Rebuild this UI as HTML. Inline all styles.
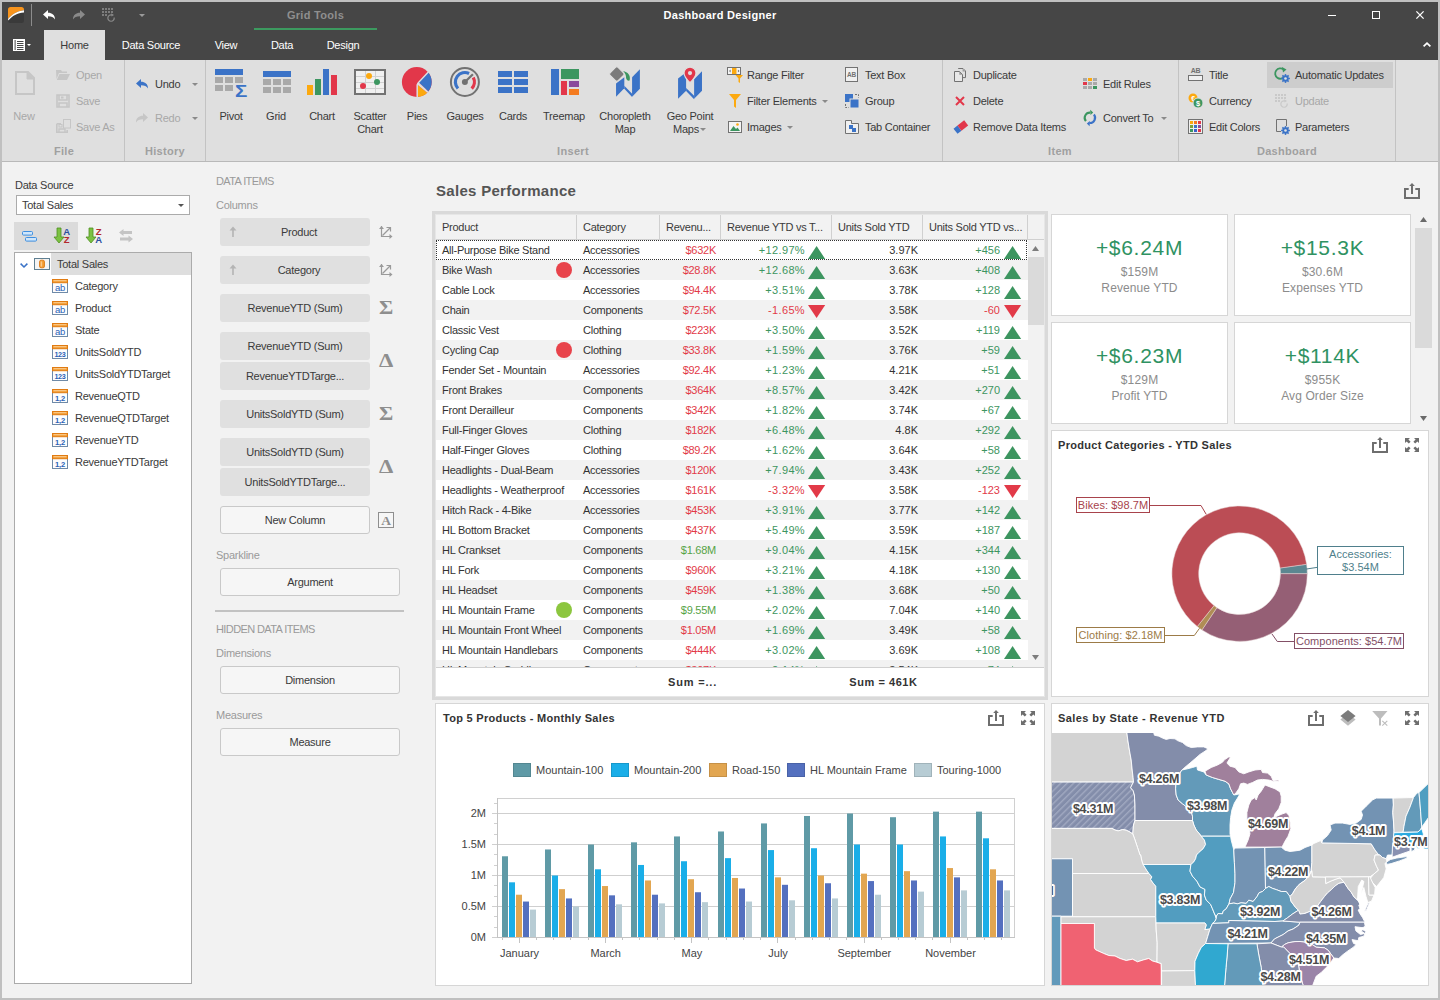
<!DOCTYPE html>
<html lang="en">
<head>
<meta charset="utf-8">
<title>Dashboard Designer</title>
<style>
*{box-sizing:border-box;margin:0;padding:0}
html,body{width:1440px;height:1000px;overflow:hidden}
body{position:relative;background:#f2f2f2;font-family:"Liberation Sans",sans-serif;font-size:11px;color:#3a3a3a;letter-spacing:-0.25px}
.b,.t,.i{position:absolute}
.t{white-space:nowrap;line-height:14px;height:14px}
.i{overflow:visible}
.w{color:#fff}
.g{color:#a8a8a8}
.h{color:#a0a0a0;font-weight:bold;letter-spacing:0.3px}
.ls0{letter-spacing:0}
.lb{color:#9a9a9a}
.bd{font-weight:bold;letter-spacing:0.3px}
.c{text-align:center}
.r{text-align:right}
</style>
</head>
<body>
<div class="b" style="left:0px;top:0px;width:1440px;height:1000px;background:#c0c0c0">
</div>
<div class="b" style="left:2px;top:2px;width:1436px;height:996px;background:#f2f2f2">
</div>
<div class="b" style="left:2px;top:2px;width:1436px;height:58px;background:#464646">
</div>
<div class="b" style="left:2px;top:60px;width:1436px;height:101px;background:#dfdfdf">
</div>
<div class="b" style="left:2px;top:161px;width:1436px;height:1px;background:#b9b9b9">
</div>
<div class="b" style="left:44px;top:30px;width:61px;height:31px;background:#dfdfdf">
</div>
<svg class="i" style="left:8px;top:7px" width="16" height="16" viewBox="0 0 16 16" >
<rect x="0" y="0" width="16" height="16" rx="2.5" fill="#3a3a3a"/>
<path d="M0 2.5A2.5 2.5 0 0 1 2.5 0H13.5A2.5 2.5 0 0 1 16 2.5V3.2C9 4 3.5 7.5 0 12Z" fill="#f7941d"/>
<path d="M0 12C3.5 7.5 9 4 16 3.2V5.5C9.5 6 4 9 0.3 13.5Z" fill="#fff"/>
</svg>
<div class="b" style="left:31px;top:4px;width:1px;height:22px;background:#8c8c8c">
</div>
<svg class="i" style="left:43px;top:10px" width="12" height="10" viewBox="0 0 12 10" >
<path d="M0 4.5L5 0V2.8C9 2.8 12 5 12 9.5C10.6 7 8.6 6.2 5 6.2V9Z" fill="#fff"/>
</svg>
<svg class="i" style="left:73px;top:10px" width="12" height="10" viewBox="0 0 12 10" >
<path d="M0 4.5L5 0V2.8C9 2.8 12 5 12 9.5C10.6 7 8.6 6.2 5 6.2V9Z" fill="#8a8a8a" transform="translate(12,0) scale(-1,1)"/>
</svg>
<svg class="i" style="left:102px;top:8px" width="14" height="14" viewBox="0 0 14 14" >
<rect x="0" y="0" width="2" height="2" fill="#7d7d7d"/>
<rect x="3" y="0" width="2" height="2" fill="#7d7d7d"/>
<rect x="6" y="0" width="2" height="2" fill="#7d7d7d"/>
<rect x="9" y="0" width="2" height="2" fill="#7d7d7d"/>
<rect x="0" y="3" width="2" height="2" fill="#7d7d7d"/>
<rect x="3" y="3" width="2" height="2" fill="#7d7d7d"/>
<rect x="6" y="3" width="2" height="2" fill="#7d7d7d"/>
<rect x="9" y="3" width="2" height="2" fill="#7d7d7d"/>
<rect x="0" y="6" width="2" height="2" fill="#7d7d7d"/>
<rect x="3" y="6" width="2" height="2" fill="#7d7d7d"/>
<path d="M12.2 9.5A3.2 3.2 0 1 1 10 7" fill="none" stroke="#8a8a8a" stroke-width="1.2"/>
<path d="M9.2 5.2L12 7L9.5 8.6Z" fill="#8a8a8a"/>
</svg>
<svg class="i" style="left:139px;top:14px" width="6" height="3" viewBox="0 0 6 3" >
<path d="M0 0H6L3 3Z" fill="#9a9a9a"/>
</svg>
<div class="t bd c" style="left:254px;top:8px;width:123px;color:#8f8f8f">Grid Tools</div>
<div class="b" style="left:254px;top:28px;width:123px;height:2px;background:#3c9a5f">
</div>
<div class="t bd c w" style="left:620px;top:8px;width:200px;">Dashboard Designer</div>
<div class="b" style="left:1328px;top:15px;width:8px;height:1px;background:#fff">
</div>
<div class="b" style="left:1372px;top:11px;width:8px;height:8px;border:1px solid #fff">
</div>
<svg class="i" style="left:1416px;top:11px" width="8" height="8" viewBox="0 0 8 8" >
<path d="M0.4 0.4L7.6 7.6M7.6 0.4L0.4 7.6" stroke="#fff" stroke-width="1.3"/>
</svg>
<svg class="i" style="left:1423px;top:42px" width="8" height="5" viewBox="0 0 8 5" >
<path d="M0.6 4.4L4 1.1L7.4 4.4" stroke="#fff" stroke-width="1.7" fill="none"/>
</svg>
<svg class="i" style="left:13px;top:39px" width="12" height="12" viewBox="0 0 12 12" >
<rect x="0" y="0" width="12" height="12" fill="#fff"/>
<rect x="1.6" y="1" width="1" height="10" fill="#464646"/>
<rect x="4" y="2" width="6.5" height="1" fill="#464646"/>
<rect x="4" y="4" width="6.5" height="1" fill="#464646"/>
<rect x="4" y="6" width="6.5" height="1" fill="#464646"/>
<rect x="4" y="8" width="6.5" height="1" fill="#464646"/>
<rect x="4" y="10" width="6.5" height="1" fill="#464646"/>
</svg>
<svg class="i" style="left:27px;top:44px" width="4" height="2" viewBox="0 0 4 2" >
<path d="M0 0H4L2 2Z" fill="#fff"/>
</svg>
<div class="t c" style="left:44px;top:38px;width:61px;">Home</div>
<div class="t c w" style="left:105px;top:38px;width:92px;">Data Source</div>
<div class="t c w" style="left:197px;top:38px;width:58px;">View</div>
<div class="t c w" style="left:255px;top:38px;width:54px;">Data</div>
<div class="t c w" style="left:309px;top:38px;width:68px;">Design</div>
<div class="b" style="left:124px;top:60px;width:1px;height:101px;background:#c3c3c3">
</div>
<div class="b" style="left:205px;top:60px;width:1px;height:101px;background:#c3c3c3">
</div>
<div class="b" style="left:942px;top:60px;width:1px;height:101px;background:#c3c3c3">
</div>
<div class="b" style="left:1178px;top:60px;width:1px;height:101px;background:#c3c3c3">
</div>
<div class="b" style="left:1395px;top:60px;width:1px;height:101px;background:#c3c3c3">
</div>
<svg class="i" style="left:15px;top:71px" width="20" height="24" viewBox="0 0 20 24" >
<path d="M1 1H13L19 7V23H1Z" fill="none" stroke="#c6c6c6" stroke-width="2"/>
<path d="M12 1V8H19" fill="#c6c6c6" stroke="#c6c6c6" stroke-width="1"/>
</svg>
<div class="t g c" style="left:4px;top:109px;width:40px;">New</div>
<svg class="i" style="left:56px;top:70px" width="14" height="10" viewBox="0 0 14 10" >
<path d="M0 0H5L6 1.5H11V3H3L0.5 9Z" fill="#c6c6c6"/>
<path d="M3.5 4H14L11 10H0.8Z" fill="#c6c6c6"/>
</svg>
<div class="t g" style="left:76px;top:68px;">Open</div>
<svg class="i" style="left:57px;top:95px" width="12" height="12" viewBox="0 0 12 12" >
<path d="M0 0H12V12H0Z M2 0V5H10V0 M2 12V8H10V12" fill="none" stroke="#c6c6c6" stroke-width="1.6"/>
<rect x="4" y="1.5" width="2.5" height="2" fill="#c6c6c6"/>
</svg>
<div class="t g" style="left:76px;top:94px;">Save</div>
<svg class="i" style="left:56px;top:119px" width="15" height="14" viewBox="0 0 15 14" >
<path d="M0.8 4.8H5 M0.8 4.8V13.2H11.2V11" fill="none" stroke="#c6c6c6" stroke-width="1.6"/>
<path d="M3 13V10H9V13" fill="none" stroke="#c6c6c6" stroke-width="1.4"/>
<rect x="3" y="5.5" width="3" height="2.5" fill="none" stroke="#c6c6c6" stroke-width="1"/>
<rect x="7.5" y="0.5" width="7" height="8.5" fill="none" stroke="#c6c6c6" stroke-width="1"/>
</svg>
<div class="t g" style="left:76px;top:120px;">Save As</div>
<div class="t h c" style="left:4px;top:144px;width:120px;">File</div>
<svg class="i" style="left:136px;top:79px" width="12" height="10" viewBox="0 0 12 10" >
<path d="M0 4.5L5 0V2.8C9 2.8 12 5 12 9.5C10.6 7 8.6 6.2 5 6.2V9Z" fill="#3b73c7"/>
</svg>
<div class="t " style="left:155px;top:77px;">Undo</div>
<svg class="i" style="left:192px;top:83px" width="6" height="3" viewBox="0 0 6 3" >
<path d="M0 0H6L3 3Z" fill="#8a8a8a"/>
</svg>
<svg class="i" style="left:136px;top:113px" width="12" height="10" viewBox="0 0 12 10" >
<path d="M0 4.5L5 0V2.8C9 2.8 12 5 12 9.5C10.6 7 8.6 6.2 5 6.2V9Z" fill="#c6c6c6" transform="translate(12,0) scale(-1,1)"/>
</svg>
<div class="t g" style="left:155px;top:111px;">Redo</div>
<svg class="i" style="left:192px;top:117px" width="6" height="3" viewBox="0 0 6 3" >
<path d="M0 0H6L3 3Z" fill="#8a8a8a"/>
</svg>
<div class="t h c" style="left:125px;top:144px;width:80px;">History</div>
<svg class="i" style="left:215px;top:69px" width="32" height="28" viewBox="0 0 32 28" >
<rect x="0" y="0" width="28" height="6" fill="#3b73c7"/>
<rect x="0" y="8" width="8" height="6" fill="#a9a9a9"/>
<rect x="0" y="16" width="8" height="6" fill="#a9a9a9"/>
<rect x="10" y="8" width="8" height="6" fill="#a9a9a9"/>
<rect x="10" y="16" width="8" height="6" fill="#a9a9a9"/>
<rect x="20" y="8" width="8" height="6" fill="#a9a9a9"/>
<text x="20" y="28" font-size="16.5" font-weight="bold" textLength="12" lengthAdjust="spacingAndGlyphs" fill="#3b73c7" font-family="Liberation Sans,sans-serif">Σ</text>
</svg>
<div class="t c" style="left:186px;top:109px;width:90px;">Pivot</div>
<svg class="i" style="left:263px;top:71px" width="28" height="22" viewBox="0 0 28 22" >
<rect x="0" y="0" width="28" height="6" fill="#3b73c7"/>
<rect x="0" y="8" width="8" height="6" fill="#a9a9a9"/>
<rect x="0" y="16" width="8" height="6" fill="#a9a9a9"/>
<rect x="10" y="8" width="8" height="6" fill="#a9a9a9"/>
<rect x="10" y="16" width="8" height="6" fill="#a9a9a9"/>
<rect x="20" y="8" width="8" height="6" fill="#a9a9a9"/>
<rect x="20" y="16" width="8" height="6" fill="#a9a9a9"/>
</svg>
<div class="t c" style="left:231px;top:109px;width:90px;">Grid</div>
<svg class="i" style="left:307px;top:69px" width="30" height="26" viewBox="0 0 30 26" >
<rect x="0" y="16" width="6" height="10" fill="#fca90f"/>
<rect x="8" y="10" width="6" height="16" fill="#3c9660"/>
<rect x="16" y="0" width="6" height="26" fill="#3b73c7"/>
<rect x="24" y="6" width="6" height="20" fill="#e2374a"/>
</svg>
<div class="t c" style="left:277px;top:109px;width:90px;">Chart</div>
<svg class="i" style="left:354px;top:69px" width="32" height="26" viewBox="0 0 32 26" >
<rect x="1" y="1" width="30" height="24" fill="#f0f0f0" stroke="#727272" stroke-width="2"/>
<rect x="2" y="7" width="28" height="1" fill="#d0d0d0"/>
<rect x="2" y="13" width="28" height="1" fill="#d0d0d0"/>
<rect x="2" y="19" width="28" height="1" fill="#d0d0d0"/>
<rect x="11" y="2" width="1" height="22" fill="#d0d0d0"/>
<rect x="21" y="2" width="1" height="22" fill="#d0d0d0"/>
<circle cx="15" cy="7" r="3" fill="#fca90f"/>
<circle cx="23" cy="13" r="3" fill="#3c9660"/>
<circle cx="9" cy="17" r="3" fill="#e2374a"/>
</svg>
<div class="t c" style="left:325px;top:109px;width:90px;">Scatter</div>
<div class="t c" style="left:325px;top:122px;width:90px;">Chart</div>
<svg class="i" style="left:402px;top:67px" width="30" height="30" viewBox="0 0 30 30" >
<circle cx="14.8" cy="15" r="14.9" fill="#e2374a"/>
<path d="M16.8 15.5L26.1 5.3A14.9 14.9 0 0 1 26.26 24.5Z" fill="#3b73c7"/>
<path d="M15.9 17.9L25.2 25.7A14.9 14.9 0 0 1 15.84 29.86Z" fill="#fca90f"/>
<path d="M16.8 15.5L26.3 24.5L25.2 25.7L15.9 17.9L15.2 16.4Z" fill="#dfdfdf"/>
<path d="M26.8 4.5L16.2 15.8L15.2 18V30.5" fill="none" stroke="#dfdfdf" stroke-width="1.5"/>
</svg>
<div class="t c" style="left:372px;top:109px;width:90px;">Pies</div>
<svg class="i" style="left:450px;top:67px" width="30" height="30" viewBox="0 0 30 30" >
<circle cx="14.9" cy="15" r="14" fill="none" stroke="#727272" stroke-width="2"/>
<path d="M7.95 21.48A9.5 9.5 0 0 1 19.06 6.46" fill="none" stroke="#3b73c7" stroke-width="3.2"/>
<path d="M23.29 10.54A9.5 9.5 0 0 1 21.73 21.60" fill="none" stroke="#e2374a" stroke-width="3.2"/>
<circle cx="14.9" cy="15" r="3" fill="#727272"/>
<path d="M14.9 15L22.9 7.2" stroke="#727272" stroke-width="2.2"/>
</svg>
<div class="t c" style="left:420px;top:109px;width:90px;">Gauges</div>
<svg class="i" style="left:498px;top:71px" width="30" height="22" viewBox="0 0 30 22" >
<rect x="0" y="0" width="14" height="6" fill="#3b73c7"/>
<rect x="0" y="8" width="14" height="6" fill="#3b73c7"/>
<rect x="0" y="16" width="14" height="6" fill="#3b73c7"/>
<rect x="16" y="0" width="14" height="6" fill="#3b73c7"/>
<rect x="16" y="8" width="14" height="6" fill="#3b73c7"/>
<rect x="16" y="16" width="14" height="6" fill="#3b73c7"/>
</svg>
<div class="t c" style="left:468px;top:109px;width:90px;">Cards</div>
<svg class="i" style="left:551px;top:69px" width="28" height="26" viewBox="0 0 28 26" >
<rect x="0" y="0" width="8" height="26" fill="#3b73c7"/>
<rect x="10" y="0" width="18" height="10" fill="#3c9660"/>
<rect x="10" y="12" width="6" height="14" fill="#e2374a"/>
<rect x="18" y="12" width="10" height="6" fill="#8b4a9c"/>
<rect x="18" y="20" width="10" height="6" fill="#f47b20"/>
</svg>
<div class="t c" style="left:519px;top:109px;width:90px;">Treemap</div>
<svg class="i" style="left:600px;top:62px" width="110" height="40" viewBox="0 0 110 40" >
<polygon points="16.04,21.39 24.29,15.28 24.29,26.36 16.04,34.76" fill="#3b73c7"/>
<polygon points="24.29,23.83 32.09,31.70 32.09,34.99 24.29,26.74" fill="#3b73c7"/>
<polygon points="32.09,15.28 39.88,7.26 39.88,26.74 32.09,34.76" fill="#3b73c7"/>
<rect x="-5.6" y="-5.6" width="11.2" height="11.2" rx="1.8" fill="#7b7b7b" stroke="#dfdfdf" stroke-width="1" transform="translate(16.81 12.07) rotate(45)"/>
<path d="M22.92 9.01C27.88 9.78 30.94 13.75 29.64 18.49C26.74 19.25 25.97 16.96 25.97 14.51C25.67 12.22 24.60 10.31 22.92 9.01Z" fill="#3c9660"/>
</svg>
<div class="t c" style="left:580px;top:109px;width:90px;">Choropleth</div>
<div class="t c" style="left:580px;top:122px;width:90px;">Map</div>
<svg class="i" style="left:600px;top:62px" width="110" height="40" viewBox="0 0 110 40" >
<polygon points="78.07,16.42 86.10,10.31 86.10,28.65 78.07,36.67" fill="#3b73c7"/>
<polygon points="86.10,25.97 94.12,33.84 94.12,37.13 86.10,28.88" fill="#3b73c7"/>
<polygon points="94.12,17.19 101.99,9.17 101.99,28.65 94.12,36.67" fill="#3b73c7"/>
<path d="M90 5.1A6 6 0 0 1 96 11.1C96 15 90 20.8 90 20.8C90 20.8 84 15 84 11.1A6 6 0 0 1 90 5.1Z" fill="#e2374a" stroke="#dfdfdf" stroke-width="1.2"/>
<circle cx="90" cy="11.1" r="2.1" fill="#dfdfdf"/>
</svg>
<div class="t c" style="left:645px;top:109px;width:90px;">Geo Point</div>
<div class="t c" style="left:641px;top:122px;width:90px;">Maps</div>
<svg class="i" style="left:700px;top:128px" width="6" height="3" viewBox="0 0 6 3" >
<path d="M0 0H6L3 3Z" fill="#8a8a8a"/>
</svg>
<div class="t h c" style="left:540px;top:144px;width:66px;">Insert</div>
<svg class="i" style="left:727px;top:67px" width="16" height="16" viewBox="0 0 16 16" >
<rect x="0.5" y="0.5" width="13" height="7" fill="#f4f4f4" stroke="#727272"/>
<rect x="5" y="1" width="4.5" height="6" fill="#fca90f"/>
<path d="M2 4L3.6 2.6V5.4Z M12.5 4L10.9 2.6V5.4Z" fill="#727272"/>
<path d="M8.5 8H16L13 11.5V16L11.5 15V11.5Z" fill="#fca90f"/>
</svg>
<div class="t " style="left:747px;top:68px;">Range Filter</div>
<svg class="i" style="left:729px;top:94px" width="12" height="14" viewBox="0 0 12 14" >
<path d="M0 0H12L7 6V14L5 12.5V6Z" fill="#fca90f"/>
</svg>
<div class="t " style="left:747px;top:94px;">Filter Elements</div>
<svg class="i" style="left:822px;top:100px" width="6" height="3" viewBox="0 0 6 3" >
<path d="M0 0H6L3 3Z" fill="#8a8a8a"/>
</svg>
<svg class="i" style="left:728px;top:121px" width="14" height="12" viewBox="0 0 14 12" >
<rect x="0.5" y="0.5" width="13" height="11" fill="#f4f4f4" stroke="#727272"/>
<path d="M2 10L5.5 5L8 8L9.5 6.5L12 10Z" fill="#3c9660"/>
<circle cx="9.5" cy="3.5" r="1.3" fill="#fca90f"/>
</svg>
<div class="t " style="left:747px;top:120px;">Images</div>
<svg class="i" style="left:787px;top:126px" width="6" height="3" viewBox="0 0 6 3" >
<path d="M0 0H6L3 3Z" fill="#8a8a8a"/>
</svg>
<svg class="i" style="left:845px;top:67px" width="13" height="15" viewBox="0 0 13 15" >
<rect x="0.5" y="0.5" width="12" height="14" fill="#f0f0f0" stroke="#727272"/>
<text x="6.5" y="10" font-size="6.5" font-weight="bold" text-anchor="middle" fill="#727272" font-family="Liberation Sans,sans-serif">AB</text>
</svg>
<div class="t " style="left:865px;top:68px;">Text Box</div>
<svg class="i" style="left:845px;top:94px" width="14" height="14" viewBox="0 0 14 14" >
<rect x="0" y="0" width="8" height="8" fill="#3b73c7"/>
<rect x="5" y="5" width="9" height="9" fill="#3b73c7" stroke="#dfdfdf" stroke-width="1"/>
<path d="M10 0.5H13.5V3.5 M0.5 10V13.5H3.5" fill="none" stroke="#727272" stroke-width="1" stroke-dasharray="2 1"/>
</svg>
<div class="t " style="left:865px;top:94px;">Group</div>
<svg class="i" style="left:845px;top:120px" width="14" height="14" viewBox="0 0 14 14" >
<path d="M0.5 0.5H6.5V3.5H13.5V13.5H0.5Z" fill="#f0f0f0" stroke="#727272"/>
<rect x="4" y="5" width="4" height="4" fill="#3b73c7"/>
<rect x="7" y="8" width="4" height="4" fill="#3b73c7"/>
</svg>
<div class="t " style="left:865px;top:120px;">Tab Container</div>
<svg class="i" style="left:954px;top:68px" width="13" height="15" viewBox="0 0 13 15" >
<path d="M4.2 0.5H9L11.5 3V9.6H9" fill="none" stroke="#727272"/>
<path d="M8.6 0.8V3.4H11.2Z" fill="#9a9a9a"/>
<path d="M0.5 3.5H5.5L8.5 6.5V13.5H0.5Z" fill="#e8e8e8" stroke="#727272"/>
<path d="M5.3 3.6V6.7H8.4Z" fill="#9a9a9a"/>
</svg>
<div class="t " style="left:973px;top:68px;">Duplicate</div>
<svg class="i" style="left:955px;top:96px" width="10" height="10" viewBox="0 0 10 10" >
<path d="M1 1L9 9M9 1L1 9" stroke="#e2374a" stroke-width="2"/>
</svg>
<div class="t " style="left:973px;top:94px;">Delete</div>
<svg class="i" style="left:954px;top:121px" width="13" height="12" viewBox="0 0 13 12" >
<g transform="rotate(-38 6.5 6)">
<rect x="0" y="3" width="5" height="6.5" fill="#3b73c7"/>
<rect x="5" y="3" width="8.5" height="6.5" fill="#e2374a"/>
</g>
</svg>
<div class="t " style="left:973px;top:120px;">Remove Data Items</div>
<svg class="i" style="left:1083px;top:78px" width="14" height="11" viewBox="0 0 14 11" >
<rect x="0" y="0" width="4" height="3" fill="#a9a9a9"/>
<rect x="5" y="0" width="4" height="3" fill="#fca90f"/>
<rect x="10" y="0" width="4" height="3" fill="#a9a9a9"/>
<rect x="0" y="4" width="4" height="3" fill="#e2374a"/>
<rect x="5" y="4" width="4" height="3" fill="#a9a9a9"/>
<rect x="10" y="4" width="4" height="3" fill="#a9a9a9"/>
<rect x="0" y="8" width="4" height="3" fill="#a9a9a9"/>
<rect x="5" y="8" width="4" height="3" fill="#a9a9a9"/>
<rect x="10" y="8" width="4" height="3" fill="#3c9660"/>
</svg>
<div class="t " style="left:1103px;top:77px;">Edit Rules</div>
<svg class="i" style="left:1083px;top:109px" width="14" height="18" viewBox="0 0 14 18" >
<path d="M2.9 12.1A5.2 5.2 0 0 1 7.35 3.6" fill="none" stroke="#3c9660" stroke-width="2.1"/>
<path d="M7.2 0.8L10.2 3.4L7.5 5.9Z" fill="#3c9660"/>
<path d="M10.9 5.5A5.2 5.2 0 0 1 6.45 14" fill="none" stroke="#3b73c7" stroke-width="2.1"/>
<path d="M6.9 12L3.8 14.6L6.6 17.2Z" fill="#3b73c7"/>
</svg>
<div class="t " style="left:1103px;top:111px;">Convert To</div>
<svg class="i" style="left:1161px;top:117px" width="6" height="3" viewBox="0 0 6 3" >
<path d="M0 0H6L3 3Z" fill="#8a8a8a"/>
</svg>
<div class="t h c" style="left:1030px;top:144px;width:60px;">Item</div>
<svg class="i" style="left:1188px;top:67px" width="15" height="14" viewBox="0 0 15 14" >
<text x="7.5" y="6" font-size="7" font-weight="bold" text-anchor="middle" fill="#727272" font-family="Liberation Sans,sans-serif">AB</text>
<rect x="0.5" y="8.5" width="14" height="5" fill="#f0f0f0" stroke="#727272"/>
</svg>
<div class="t " style="left:1209px;top:68px;">Title</div>
<svg class="i" style="left:1188px;top:93px" width="16" height="16" viewBox="0 0 16 16" >
<circle cx="5" cy="5" r="4.5" fill="#fca90f"/>
<text x="5" y="7.6" font-size="7" font-weight="bold" text-anchor="middle" fill="#fff" font-family="Liberation Sans,sans-serif">€</text>
<circle cx="10" cy="10" r="5" fill="#3c9660" stroke="#dfdfdf" stroke-width="1"/>
<text x="10" y="12.8" font-size="7.5" font-weight="bold" text-anchor="middle" fill="#fff" font-family="Liberation Sans,sans-serif">$</text>
</svg>
<div class="t " style="left:1209px;top:94px;">Currency</div>
<svg class="i" style="left:1188px;top:119px" width="15" height="15" viewBox="0 0 15 15" >
<rect x="0.5" y="0.5" width="14" height="14" fill="#f0f0f0" stroke="#727272"/>
<rect x="2" y="2" width="3" height="3" fill="#fca90f"/>
<rect x="6" y="2" width="3" height="3" fill="#f47b20"/>
<rect x="10" y="2" width="3" height="3" fill="#e2374a"/>
<rect x="2" y="6" width="3" height="3" fill="#7aa33c"/>
<rect x="6" y="6" width="3" height="3" fill="#3b73c7"/>
<rect x="10" y="6" width="3" height="3" fill="#8b4a9c"/>
<rect x="2" y="10" width="3" height="3" fill="#3c9660"/>
<rect x="6" y="10" width="3" height="3" fill="#3b5fc7"/>
<rect x="10" y="10" width="3" height="3" fill="#e2374a"/>
</svg>
<div class="t " style="left:1209px;top:120px;">Edit Colors</div>
<div class="b" style="left:1267px;top:62px;width:126px;height:26px;background:#cdcdcd">
</div>
<svg class="i" style="left:1274px;top:67px" width="16" height="16" viewBox="0 0 16 16" >
<path d="M10.6 9.6A5.2 5.2 0 1 1 9.5 2.4" fill="none" stroke="#3c9660" stroke-width="1.8"/>
<path d="M8 0L12.5 2.4L9 5.6Z" fill="#3c9660"/>
<circle cx="11.5" cy="11.5" r="2.3" fill="none" stroke="#3b73c7" stroke-width="1.7"/>
<rect x="10.75" y="7.1" width="1.5" height="8.8" fill="#3b73c7" transform="rotate(0 11.5 11.5)"/>
<rect x="10.75" y="7.1" width="1.5" height="8.8" fill="#3b73c7" transform="rotate(45 11.5 11.5)"/>
<rect x="10.75" y="7.1" width="1.5" height="8.8" fill="#3b73c7" transform="rotate(90 11.5 11.5)"/>
<rect x="10.75" y="7.1" width="1.5" height="8.8" fill="#3b73c7" transform="rotate(135 11.5 11.5)"/>
<circle cx="11.5" cy="11.5" r="1.3" fill="#e4e4e4"/>
</svg>
<div class="t " style="left:1295px;top:68px;">Automatic Updates</div>
<svg class="i" style="left:1275px;top:94px" width="14" height="14" viewBox="0 0 14 14" >
<rect x="0" y="0" width="2" height="2" fill="#c9c9c9"/>
<rect x="3" y="0" width="2" height="2" fill="#c9c9c9"/>
<rect x="6" y="0" width="2" height="2" fill="#c9c9c9"/>
<rect x="9" y="0" width="2" height="2" fill="#c9c9c9"/>
<rect x="0" y="3" width="2" height="2" fill="#c9c9c9"/>
<rect x="3" y="3" width="2" height="2" fill="#c9c9c9"/>
<rect x="6" y="3" width="2" height="2" fill="#c9c9c9"/>
<rect x="9" y="3" width="2" height="2" fill="#c9c9c9"/>
<rect x="0" y="6" width="2" height="2" fill="#c9c9c9"/>
<rect x="3" y="6" width="2" height="2" fill="#c9c9c9"/>
<path d="M12.2 9.5A3.2 3.2 0 1 1 10 7" fill="none" stroke="#c9c9c9" stroke-width="1.2"/>
<path d="M9.2 5.2L12 7L9.5 8.6Z" fill="#c9c9c9"/>
</svg>
<div class="t g" style="left:1295px;top:94px;">Update</div>
<svg class="i" style="left:1276px;top:119px" width="14" height="16" viewBox="0 0 14 16" >
<path d="M0.5 0.5H10.5V7 M0.5 0.5V12.5H5" fill="none" stroke="#727272"/>
<circle cx="9.5" cy="11.5" r="2.3" fill="none" stroke="#3b73c7" stroke-width="1.7"/>
<rect x="8.75" y="7.1" width="1.5" height="8.8" fill="#3b73c7" transform="rotate(0 9.5 11.5)"/>
<rect x="8.75" y="7.1" width="1.5" height="8.8" fill="#3b73c7" transform="rotate(45 9.5 11.5)"/>
<rect x="8.75" y="7.1" width="1.5" height="8.8" fill="#3b73c7" transform="rotate(90 9.5 11.5)"/>
<rect x="8.75" y="7.1" width="1.5" height="8.8" fill="#3b73c7" transform="rotate(135 9.5 11.5)"/>
<circle cx="9.5" cy="11.5" r="1.3" fill="#e4e4e4"/>
</svg>
<div class="t " style="left:1295px;top:120px;">Parameters</div>
<div class="t h c" style="left:1237px;top:144px;width:100px;">Dashboard</div>
<div class="t " style="left:15px;top:178px;">Data Source</div>
<div class="b" style="left:16px;top:195px;width:174px;height:20px;background:#fff;border:1px solid #ababab">
</div>
<div class="t " style="left:22px;top:198px;">Total Sales</div>
<svg class="i" style="left:178px;top:204px" width="6" height="3" viewBox="0 0 6 3" >
<path d="M0 0H6L3 3Z" fill="#555"/>
</svg>
<div class="b" style="left:14px;top:222px;width:64px;height:28px;background:#dbdbdb">
</div>
<svg class="i" style="left:22px;top:231px" width="15" height="11" viewBox="0 0 15 11" >
<rect x="0.5" y="0.5" width="10" height="3.6" rx="1" fill="#cfe6fb" stroke="#3f8fe0"/>
<rect x="3.5" y="6.5" width="11" height="3.6" rx="1" fill="#cfe6fb" stroke="#3f8fe0"/>
</svg>
<svg class="i" style="left:54px;top:228px" width="16" height="15" viewBox="0 0 16 15" >
<path d="M3 0H7V9H10L5 15L0 9H3Z" fill="#7cc242" stroke="#4f8f22" stroke-width="0.8"/>
<text x="12.5" y="6.5" font-size="9.5" font-weight="bold" text-anchor="middle" fill="#2c4f9e" font-family="Liberation Sans,sans-serif">A</text>
<text x="12.5" y="14.5" font-size="9.5" font-weight="bold" text-anchor="middle" fill="#b3282d" font-family="Liberation Sans,sans-serif">Z</text>
</svg>
<svg class="i" style="left:86px;top:228px" width="16" height="15" viewBox="0 0 16 15" >
<path d="M3 0H7V9H10L5 15L0 9H3Z" fill="#7cc242" stroke="#4f8f22" stroke-width="0.8"/>
<text x="12.5" y="6.5" font-size="9.5" font-weight="bold" text-anchor="middle" fill="#b3282d" font-family="Liberation Sans,sans-serif">Z</text>
<text x="12.5" y="14.5" font-size="9.5" font-weight="bold" text-anchor="middle" fill="#2c4f9e" font-family="Liberation Sans,sans-serif">A</text>
</svg>
<svg class="i" style="left:119px;top:229px" width="14" height="14" viewBox="0 0 14 14" >
<path d="M0 3.5L4.5 0V2H13V5H4.5V7Z" fill="#c4c4c4"/>
<path d="M14 10L9.5 6.5V8.5H1V11.5H9.5V13.5Z" fill="#c4c4c4"/>
</svg>
<div class="b" style="left:14px;top:252px;width:178px;height:732px;background:#fff;border:1px solid #ababab">
</div>
<div class="b" style="left:51px;top:253px;width:140px;height:22px;background:#dedede">
</div>
<svg class="i" style="left:20px;top:263px" width="8" height="5" viewBox="0 0 8 5" >
<path d="M0.6 0.6L4 4L7.4 0.6" fill="none" stroke="#3b73c7" stroke-width="1.5"/>
</svg>
<svg class="i" style="left:34px;top:258px" width="16" height="12" viewBox="0 0 16 12" >
<rect x="0.5" y="0.5" width="15" height="11" fill="#f4f4f4" stroke="#5f7f92"/>
<rect x="5.5" y="2.2" width="5" height="7.6" rx="1.6" fill="#f39a2d" stroke="#d9730d" stroke-width="0.8"/>
<rect x="6.6" y="3.4" width="1.6" height="5.2" fill="#fbc98a"/>
</svg>
<div class="t " style="left:57px;top:257px;">Total Sales</div>
<svg class="i" style="left:52px;top:279px" width="16" height="14" viewBox="0 0 16 14" >
<rect x="0.5" y="0.5" width="15" height="13" fill="#fdfdfd" stroke="#6f8aa8"/>
<rect x="0.5" y="0.5" width="15" height="3.2" fill="#f39a2d" stroke="#e07b12"/>
<rect x="1.5" y="1.2" width="13" height="1" fill="#fbd09a"/>
<text x="8" y="11.6" font-size="9.5" font-weight="normal" text-anchor="middle" fill="#2a62b8" font-family="Liberation Sans,sans-serif">ab</text>
</svg>
<div class="t " style="left:75px;top:279px;">Category</div>
<svg class="i" style="left:52px;top:301px" width="16" height="14" viewBox="0 0 16 14" >
<rect x="0.5" y="0.5" width="15" height="13" fill="#fdfdfd" stroke="#6f8aa8"/>
<rect x="0.5" y="0.5" width="15" height="3.2" fill="#f39a2d" stroke="#e07b12"/>
<rect x="1.5" y="1.2" width="13" height="1" fill="#fbd09a"/>
<text x="8" y="11.6" font-size="9.5" font-weight="normal" text-anchor="middle" fill="#2a62b8" font-family="Liberation Sans,sans-serif">ab</text>
</svg>
<div class="t " style="left:75px;top:301px;">Product</div>
<svg class="i" style="left:52px;top:323px" width="16" height="14" viewBox="0 0 16 14" >
<rect x="0.5" y="0.5" width="15" height="13" fill="#fdfdfd" stroke="#6f8aa8"/>
<rect x="0.5" y="0.5" width="15" height="3.2" fill="#f39a2d" stroke="#e07b12"/>
<rect x="1.5" y="1.2" width="13" height="1" fill="#fbd09a"/>
<text x="8" y="11.6" font-size="9.5" font-weight="normal" text-anchor="middle" fill="#2a62b8" font-family="Liberation Sans,sans-serif">ab</text>
</svg>
<div class="t " style="left:75px;top:323px;">State</div>
<svg class="i" style="left:52px;top:345px" width="16" height="14" viewBox="0 0 16 14" >
<rect x="0.5" y="0.5" width="15" height="13" fill="#fdfdfd" stroke="#6f8aa8"/>
<rect x="0.5" y="0.5" width="15" height="3.2" fill="#f39a2d" stroke="#e07b12"/>
<rect x="1.5" y="1.2" width="13" height="1" fill="#fbd09a"/>
<text x="8" y="11.6" font-size="7.2" font-weight="bold" text-anchor="middle" fill="#2a62b8" font-family="Liberation Sans,sans-serif">123</text>
</svg>
<div class="t " style="left:75px;top:345px;">UnitsSoldYTD</div>
<svg class="i" style="left:52px;top:367px" width="16" height="14" viewBox="0 0 16 14" >
<rect x="0.5" y="0.5" width="15" height="13" fill="#fdfdfd" stroke="#6f8aa8"/>
<rect x="0.5" y="0.5" width="15" height="3.2" fill="#f39a2d" stroke="#e07b12"/>
<rect x="1.5" y="1.2" width="13" height="1" fill="#fbd09a"/>
<text x="8" y="11.6" font-size="7.2" font-weight="bold" text-anchor="middle" fill="#2a62b8" font-family="Liberation Sans,sans-serif">123</text>
</svg>
<div class="t " style="left:75px;top:367px;">UnitsSoldYTDTarget</div>
<svg class="i" style="left:52px;top:389px" width="16" height="14" viewBox="0 0 16 14" >
<rect x="0.5" y="0.5" width="15" height="13" fill="#fdfdfd" stroke="#6f8aa8"/>
<rect x="0.5" y="0.5" width="15" height="3.2" fill="#f39a2d" stroke="#e07b12"/>
<rect x="1.5" y="1.2" width="13" height="1" fill="#fbd09a"/>
<text x="8" y="11.6" font-size="7.6" font-weight="bold" text-anchor="middle" fill="#2a62b8" font-family="Liberation Sans,sans-serif">1,2</text>
</svg>
<div class="t " style="left:75px;top:389px;">RevenueQTD</div>
<svg class="i" style="left:52px;top:411px" width="16" height="14" viewBox="0 0 16 14" >
<rect x="0.5" y="0.5" width="15" height="13" fill="#fdfdfd" stroke="#6f8aa8"/>
<rect x="0.5" y="0.5" width="15" height="3.2" fill="#f39a2d" stroke="#e07b12"/>
<rect x="1.5" y="1.2" width="13" height="1" fill="#fbd09a"/>
<text x="8" y="11.6" font-size="7.6" font-weight="bold" text-anchor="middle" fill="#2a62b8" font-family="Liberation Sans,sans-serif">1,2</text>
</svg>
<div class="t " style="left:75px;top:411px;">RevenueQTDTarget</div>
<svg class="i" style="left:52px;top:433px" width="16" height="14" viewBox="0 0 16 14" >
<rect x="0.5" y="0.5" width="15" height="13" fill="#fdfdfd" stroke="#6f8aa8"/>
<rect x="0.5" y="0.5" width="15" height="3.2" fill="#f39a2d" stroke="#e07b12"/>
<rect x="1.5" y="1.2" width="13" height="1" fill="#fbd09a"/>
<text x="8" y="11.6" font-size="7.6" font-weight="bold" text-anchor="middle" fill="#2a62b8" font-family="Liberation Sans,sans-serif">1,2</text>
</svg>
<div class="t " style="left:75px;top:433px;">RevenueYTD</div>
<svg class="i" style="left:52px;top:455px" width="16" height="14" viewBox="0 0 16 14" >
<rect x="0.5" y="0.5" width="15" height="13" fill="#fdfdfd" stroke="#6f8aa8"/>
<rect x="0.5" y="0.5" width="15" height="3.2" fill="#f39a2d" stroke="#e07b12"/>
<rect x="1.5" y="1.2" width="13" height="1" fill="#fbd09a"/>
<text x="8" y="11.6" font-size="7.6" font-weight="bold" text-anchor="middle" fill="#2a62b8" font-family="Liberation Sans,sans-serif">1,2</text>
</svg>
<div class="t " style="left:75px;top:455px;">RevenueYTDTarget</div>
<div class="t lb" style="left:216px;top:174px;letter-spacing:-0.6px">DATA ITEMS</div>
<div class="t lb" style="left:216px;top:198px;">Columns</div>
<div class="b" style="left:220px;top:218px;width:150px;height:28px;background:#e0e0e0;border-radius:3px">
</div>
<svg class="i" style="left:229px;top:226px" width="8" height="11" viewBox="0 0 8 11" >
<path d="M4 0.5L7.5 4.5H4.8V11H3.2V4.5H0.5Z" fill="#b4b4b4"/>
</svg>
<div class="t c" style="left:224px;top:225px;width:150px;">Product</div>
<svg class="i" style="left:379px;top:226px" width="14" height="13" viewBox="0 0 14 13" >
<path d="M2.5 0V10.5H13" fill="none" stroke="#9a9a9a" stroke-width="1.2"/>
<path d="M0 3L2.5 0L5 3Z M10.5 8L13.5 10.5L10.5 13Z" fill="#9a9a9a"/>
<path d="M3.5 9.5L11 2" stroke="#9a9a9a" stroke-width="1.2"/>
<path d="M7.5 1.5H11.5V5.5" fill="none" stroke="#9a9a9a" stroke-width="1.2"/>
</svg>
<div class="b" style="left:220px;top:256px;width:150px;height:28px;background:#e0e0e0;border-radius:3px">
</div>
<svg class="i" style="left:229px;top:264px" width="8" height="11" viewBox="0 0 8 11" >
<path d="M4 0.5L7.5 4.5H4.8V11H3.2V4.5H0.5Z" fill="#b4b4b4"/>
</svg>
<div class="t c" style="left:224px;top:263px;width:150px;">Category</div>
<svg class="i" style="left:379px;top:264px" width="14" height="13" viewBox="0 0 14 13" >
<path d="M2.5 0V10.5H13" fill="none" stroke="#9a9a9a" stroke-width="1.2"/>
<path d="M0 3L2.5 0L5 3Z M10.5 8L13.5 10.5L10.5 13Z" fill="#9a9a9a"/>
<path d="M3.5 9.5L11 2" stroke="#9a9a9a" stroke-width="1.2"/>
<path d="M7.5 1.5H11.5V5.5" fill="none" stroke="#9a9a9a" stroke-width="1.2"/>
</svg>
<div class="b" style="left:220px;top:294px;width:150px;height:28px;background:#e0e0e0;border-radius:3px">
</div>
<div class="t c" style="left:220px;top:301px;width:150px;">RevenueYTD (Sum)</div>
<svg class="i" style="left:379px;top:301px" width="14" height="14" viewBox="0 0 14 14" >
<text x="0" y="13.2" font-size="19" font-weight="bold" textLength="14" lengthAdjust="spacingAndGlyphs" fill="#8e8e8e" font-family="Liberation Serif,serif">Σ</text>
</svg>
<div class="b" style="left:220px;top:332px;width:150px;height:28px;background:#e0e0e0;border-radius:3px">
</div>
<div class="t c" style="left:220px;top:339px;width:150px;">RevenueYTD (Sum)</div>
<div class="b" style="left:220px;top:362px;width:150px;height:28px;background:#e0e0e0;border-radius:3px">
</div>
<div class="t c" style="left:220px;top:369px;width:150px;">RevenueYTDTarge...</div>
<svg class="i" style="left:379px;top:354px" width="14" height="14" viewBox="0 0 14 14" >
<text x="0" y="13.2" font-size="19" font-weight="bold" textLength="14" lengthAdjust="spacingAndGlyphs" fill="#8e8e8e" font-family="Liberation Serif,serif">Δ</text>
</svg>
<div class="b" style="left:220px;top:400px;width:150px;height:28px;background:#e0e0e0;border-radius:3px">
</div>
<div class="t c" style="left:220px;top:407px;width:150px;">UnitsSoldYTD (Sum)</div>
<svg class="i" style="left:379px;top:407px" width="14" height="14" viewBox="0 0 14 14" >
<text x="0" y="13.2" font-size="19" font-weight="bold" textLength="14" lengthAdjust="spacingAndGlyphs" fill="#8e8e8e" font-family="Liberation Serif,serif">Σ</text>
</svg>
<div class="b" style="left:220px;top:438px;width:150px;height:28px;background:#e0e0e0;border-radius:3px">
</div>
<div class="t c" style="left:220px;top:445px;width:150px;">UnitsSoldYTD (Sum)</div>
<div class="b" style="left:220px;top:468px;width:150px;height:28px;background:#e0e0e0;border-radius:3px">
</div>
<div class="t c" style="left:220px;top:475px;width:150px;">UnitsSoldYTDTarge...</div>
<svg class="i" style="left:379px;top:460px" width="14" height="14" viewBox="0 0 14 14" >
<text x="0" y="13.2" font-size="19" font-weight="bold" textLength="14" lengthAdjust="spacingAndGlyphs" fill="#8e8e8e" font-family="Liberation Serif,serif">Δ</text>
</svg>
<div class="b" style="left:220px;top:506px;width:150px;height:28px;background:#f6f6f6;border:1px solid #c9c9c9;border-radius:3px">
</div>
<div class="t c" style="left:220px;top:513px;width:150px;">New Column</div>
<svg class="i" style="left:378px;top:512px" width="16" height="16" viewBox="0 0 16 16" >
<rect x="0.5" y="0.5" width="15" height="15" fill="#f6f6f6" stroke="#8e8e8e"/>
<text x="8" y="13" font-size="13.5" font-weight="bold" text-anchor="middle" fill="#8e8e8e" font-family="Liberation Serif,serif">A</text>
</svg>
<div class="t lb" style="left:216px;top:548px;">Sparkline</div>
<div class="b" style="left:220px;top:568px;width:180px;height:28px;background:#f6f6f6;border:1px solid #c9c9c9;border-radius:3px">
</div>
<div class="t c" style="left:220px;top:575px;width:180px;">Argument</div>
<div class="b" style="left:215px;top:610px;width:189px;height:2px;background:#c2c2c2">
</div>
<div class="t lb" style="left:216px;top:622px;letter-spacing:-0.6px">HIDDEN DATA ITEMS</div>
<div class="t lb" style="left:216px;top:646px;">Dimensions</div>
<div class="b" style="left:220px;top:666px;width:180px;height:28px;background:#f6f6f6;border:1px solid #c9c9c9;border-radius:3px">
</div>
<div class="t c" style="left:220px;top:673px;width:180px;">Dimension</div>
<div class="t lb" style="left:216px;top:708px;">Measures</div>
<div class="b" style="left:220px;top:728px;width:180px;height:28px;background:#f6f6f6;border:1px solid #c9c9c9;border-radius:3px">
</div>
<div class="t c" style="left:220px;top:735px;width:180px;">Measure</div>
<div class="t bd" style="left:436px;top:184px;font-size:15px;color:#555;line-height:20px;height:20px;top:181px;letter-spacing:0.3px">Sales Performance</div>
<div class="b" style="left:432px;top:211px;width:616px;height:489px;background:#d9d9d9">
</div>
<div class="b" style="left:435px;top:214px;width:610px;height:483px;background:#e6e6e6">
</div>
<div class="b" style="left:436px;top:215px;width:608px;height:481px;background:#fff">
</div>
<div class="b" style="left:436px;top:215px;width:608px;height:24px;background:#f2f2f2">
</div>
<div class="b" style="left:436px;top:239px;width:608px;height:1px;background:#d0d0d0">
</div>
<div class="b" style="left:576px;top:215px;width:1px;height:24px;background:#d0d0d0">
</div>
<div class="b" style="left:659px;top:215px;width:1px;height:24px;background:#d0d0d0">
</div>
<div class="b" style="left:720px;top:215px;width:1px;height:24px;background:#d0d0d0">
</div>
<div class="b" style="left:831px;top:215px;width:1px;height:24px;background:#d0d0d0">
</div>
<div class="b" style="left:922px;top:215px;width:1px;height:24px;background:#d0d0d0">
</div>
<div class="b" style="left:1027px;top:215px;width:1px;height:24px;background:#d0d0d0">
</div>
<div class="t " style="left:442px;top:220px;">Product</div>
<div class="t " style="left:583px;top:220px;">Category</div>
<div class="t " style="left:666px;top:220px;">Revenu...</div>
<div class="t " style="left:727px;top:220px;">Revenue YTD vs T...</div>
<div class="t " style="left:838px;top:220px;">Units Sold YTD</div>
<div class="t " style="left:929px;top:220px;">Units Sold YTD vs...</div>
<div class="b" style="left:436px;top:240px;width:592px;height:427px;overflow:hidden">
<div class="t " style="left:6px;top:3px;color:#333">All-Purpose Bike Stand</div>
<div class="t " style="left:147px;top:3px;color:#333">Accessories</div>
<div class="t r" style="left:224px;top:3px;width:56px;color:#e23a48">$632K</div>
<div class="t r" style="left:285px;top:3px;width:84px;color:#3d9560;letter-spacing:0.35px">+12.97%</div>
<svg class="i" style="left:372px;top:5.5px" width="18" height="13" viewBox="0 0 18 13" >
<path d="M0 13L8.6 0L17.2 13Z" fill="#3d9560"/>
</svg>
<div class="t r" style="left:396px;top:3px;width:86px;color:#333;letter-spacing:0">3.97K</div>
<div class="t r" style="left:487px;top:3px;width:77px;color:#3d9560;letter-spacing:0">+456</div>
<svg class="i" style="left:568px;top:5.5px" width="18" height="13" viewBox="0 0 18 13" >
<path d="M0 13L8.6 0L17.2 13Z" fill="#3d9560"/>
</svg>
<div class="b" style="left:0px;top:20px;width:592px;height:20px;background:#f2f2f2">
</div>
<div class="t " style="left:6px;top:23px;color:#333">Bike Wash</div>
<div class="b" style="left:120px;top:22px;width:16px;height:16px;background:#e8434b;border-radius:8px">
</div>
<div class="t " style="left:147px;top:23px;color:#333">Accessories</div>
<div class="t r" style="left:224px;top:23px;width:56px;color:#e23a48">$28.8K</div>
<div class="t r" style="left:285px;top:23px;width:84px;color:#3d9560;letter-spacing:0.35px">+12.68%</div>
<svg class="i" style="left:372px;top:25.5px" width="18" height="13" viewBox="0 0 18 13" >
<path d="M0 13L8.6 0L17.2 13Z" fill="#3d9560"/>
</svg>
<div class="t r" style="left:396px;top:23px;width:86px;color:#333;letter-spacing:0">3.63K</div>
<div class="t r" style="left:487px;top:23px;width:77px;color:#3d9560;letter-spacing:0">+408</div>
<svg class="i" style="left:568px;top:25.5px" width="18" height="13" viewBox="0 0 18 13" >
<path d="M0 13L8.6 0L17.2 13Z" fill="#3d9560"/>
</svg>
<div class="t " style="left:6px;top:43px;color:#333">Cable Lock</div>
<div class="t " style="left:147px;top:43px;color:#333">Accessories</div>
<div class="t r" style="left:224px;top:43px;width:56px;color:#e23a48">$94.4K</div>
<div class="t r" style="left:285px;top:43px;width:84px;color:#3d9560;letter-spacing:0.35px">+3.51%</div>
<svg class="i" style="left:372px;top:45.5px" width="18" height="13" viewBox="0 0 18 13" >
<path d="M0 13L8.6 0L17.2 13Z" fill="#3d9560"/>
</svg>
<div class="t r" style="left:396px;top:43px;width:86px;color:#333;letter-spacing:0">3.78K</div>
<div class="t r" style="left:487px;top:43px;width:77px;color:#3d9560;letter-spacing:0">+128</div>
<svg class="i" style="left:568px;top:45.5px" width="18" height="13" viewBox="0 0 18 13" >
<path d="M0 13L8.6 0L17.2 13Z" fill="#3d9560"/>
</svg>
<div class="b" style="left:0px;top:60px;width:592px;height:20px;background:#f2f2f2">
</div>
<div class="t " style="left:6px;top:63px;color:#333">Chain</div>
<div class="t " style="left:147px;top:63px;color:#333">Components</div>
<div class="t r" style="left:224px;top:63px;width:56px;color:#e23a48">$72.5K</div>
<div class="t r" style="left:285px;top:63px;width:84px;color:#e23a48;letter-spacing:0.35px">-1.65%</div>
<svg class="i" style="left:372px;top:65px" width="18" height="13" viewBox="0 0 18 13" >
<path d="M0 0H17.2L8.6 13Z" fill="#e23a48"/>
</svg>
<div class="t r" style="left:396px;top:63px;width:86px;color:#333;letter-spacing:0">3.58K</div>
<div class="t r" style="left:487px;top:63px;width:77px;color:#e23a48;letter-spacing:0">-60</div>
<svg class="i" style="left:568px;top:65px" width="18" height="13" viewBox="0 0 18 13" >
<path d="M0 0H17.2L8.6 13Z" fill="#e23a48"/>
</svg>
<div class="t " style="left:6px;top:83px;color:#333">Classic Vest</div>
<div class="t " style="left:147px;top:83px;color:#333">Clothing</div>
<div class="t r" style="left:224px;top:83px;width:56px;color:#e23a48">$223K</div>
<div class="t r" style="left:285px;top:83px;width:84px;color:#3d9560;letter-spacing:0.35px">+3.50%</div>
<svg class="i" style="left:372px;top:85.5px" width="18" height="13" viewBox="0 0 18 13" >
<path d="M0 13L8.6 0L17.2 13Z" fill="#3d9560"/>
</svg>
<div class="t r" style="left:396px;top:83px;width:86px;color:#333;letter-spacing:0">3.52K</div>
<div class="t r" style="left:487px;top:83px;width:77px;color:#3d9560;letter-spacing:0">+119</div>
<svg class="i" style="left:568px;top:85.5px" width="18" height="13" viewBox="0 0 18 13" >
<path d="M0 13L8.6 0L17.2 13Z" fill="#3d9560"/>
</svg>
<div class="b" style="left:0px;top:100px;width:592px;height:20px;background:#f2f2f2">
</div>
<div class="t " style="left:6px;top:103px;color:#333">Cycling Cap</div>
<div class="b" style="left:120px;top:102px;width:16px;height:16px;background:#e8434b;border-radius:8px">
</div>
<div class="t " style="left:147px;top:103px;color:#333">Clothing</div>
<div class="t r" style="left:224px;top:103px;width:56px;color:#e23a48">$33.8K</div>
<div class="t r" style="left:285px;top:103px;width:84px;color:#3d9560;letter-spacing:0.35px">+1.59%</div>
<svg class="i" style="left:372px;top:105.5px" width="18" height="13" viewBox="0 0 18 13" >
<path d="M0 13L8.6 0L17.2 13Z" fill="#3d9560"/>
</svg>
<div class="t r" style="left:396px;top:103px;width:86px;color:#333;letter-spacing:0">3.76K</div>
<div class="t r" style="left:487px;top:103px;width:77px;color:#3d9560;letter-spacing:0">+59</div>
<svg class="i" style="left:568px;top:105.5px" width="18" height="13" viewBox="0 0 18 13" >
<path d="M0 13L8.6 0L17.2 13Z" fill="#3d9560"/>
</svg>
<div class="t " style="left:6px;top:123px;color:#333">Fender Set - Mountain</div>
<div class="t " style="left:147px;top:123px;color:#333">Accessories</div>
<div class="t r" style="left:224px;top:123px;width:56px;color:#e23a48">$92.4K</div>
<div class="t r" style="left:285px;top:123px;width:84px;color:#3d9560;letter-spacing:0.35px">+1.23%</div>
<svg class="i" style="left:372px;top:125.5px" width="18" height="13" viewBox="0 0 18 13" >
<path d="M0 13L8.6 0L17.2 13Z" fill="#3d9560"/>
</svg>
<div class="t r" style="left:396px;top:123px;width:86px;color:#333;letter-spacing:0">4.21K</div>
<div class="t r" style="left:487px;top:123px;width:77px;color:#3d9560;letter-spacing:0">+51</div>
<svg class="i" style="left:568px;top:125.5px" width="18" height="13" viewBox="0 0 18 13" >
<path d="M0 13L8.6 0L17.2 13Z" fill="#3d9560"/>
</svg>
<div class="b" style="left:0px;top:140px;width:592px;height:20px;background:#f2f2f2">
</div>
<div class="t " style="left:6px;top:143px;color:#333">Front Brakes</div>
<div class="t " style="left:147px;top:143px;color:#333">Components</div>
<div class="t r" style="left:224px;top:143px;width:56px;color:#e23a48">$364K</div>
<div class="t r" style="left:285px;top:143px;width:84px;color:#3d9560;letter-spacing:0.35px">+8.57%</div>
<svg class="i" style="left:372px;top:145.5px" width="18" height="13" viewBox="0 0 18 13" >
<path d="M0 13L8.6 0L17.2 13Z" fill="#3d9560"/>
</svg>
<div class="t r" style="left:396px;top:143px;width:86px;color:#333;letter-spacing:0">3.42K</div>
<div class="t r" style="left:487px;top:143px;width:77px;color:#3d9560;letter-spacing:0">+270</div>
<svg class="i" style="left:568px;top:145.5px" width="18" height="13" viewBox="0 0 18 13" >
<path d="M0 13L8.6 0L17.2 13Z" fill="#3d9560"/>
</svg>
<div class="t " style="left:6px;top:163px;color:#333">Front Derailleur</div>
<div class="t " style="left:147px;top:163px;color:#333">Components</div>
<div class="t r" style="left:224px;top:163px;width:56px;color:#e23a48">$342K</div>
<div class="t r" style="left:285px;top:163px;width:84px;color:#3d9560;letter-spacing:0.35px">+1.82%</div>
<svg class="i" style="left:372px;top:165.5px" width="18" height="13" viewBox="0 0 18 13" >
<path d="M0 13L8.6 0L17.2 13Z" fill="#3d9560"/>
</svg>
<div class="t r" style="left:396px;top:163px;width:86px;color:#333;letter-spacing:0">3.74K</div>
<div class="t r" style="left:487px;top:163px;width:77px;color:#3d9560;letter-spacing:0">+67</div>
<svg class="i" style="left:568px;top:165.5px" width="18" height="13" viewBox="0 0 18 13" >
<path d="M0 13L8.6 0L17.2 13Z" fill="#3d9560"/>
</svg>
<div class="b" style="left:0px;top:180px;width:592px;height:20px;background:#f2f2f2">
</div>
<div class="t " style="left:6px;top:183px;color:#333">Full-Finger Gloves</div>
<div class="t " style="left:147px;top:183px;color:#333">Clothing</div>
<div class="t r" style="left:224px;top:183px;width:56px;color:#e23a48">$182K</div>
<div class="t r" style="left:285px;top:183px;width:84px;color:#3d9560;letter-spacing:0.35px">+6.48%</div>
<svg class="i" style="left:372px;top:185.5px" width="18" height="13" viewBox="0 0 18 13" >
<path d="M0 13L8.6 0L17.2 13Z" fill="#3d9560"/>
</svg>
<div class="t r" style="left:396px;top:183px;width:86px;color:#333;letter-spacing:0">4.8K</div>
<div class="t r" style="left:487px;top:183px;width:77px;color:#3d9560;letter-spacing:0">+292</div>
<svg class="i" style="left:568px;top:185.5px" width="18" height="13" viewBox="0 0 18 13" >
<path d="M0 13L8.6 0L17.2 13Z" fill="#3d9560"/>
</svg>
<div class="t " style="left:6px;top:203px;color:#333">Half-Finger Gloves</div>
<div class="t " style="left:147px;top:203px;color:#333">Clothing</div>
<div class="t r" style="left:224px;top:203px;width:56px;color:#e23a48">$89.2K</div>
<div class="t r" style="left:285px;top:203px;width:84px;color:#3d9560;letter-spacing:0.35px">+1.62%</div>
<svg class="i" style="left:372px;top:205.5px" width="18" height="13" viewBox="0 0 18 13" >
<path d="M0 13L8.6 0L17.2 13Z" fill="#3d9560"/>
</svg>
<div class="t r" style="left:396px;top:203px;width:86px;color:#333;letter-spacing:0">3.64K</div>
<div class="t r" style="left:487px;top:203px;width:77px;color:#3d9560;letter-spacing:0">+58</div>
<svg class="i" style="left:568px;top:205.5px" width="18" height="13" viewBox="0 0 18 13" >
<path d="M0 13L8.6 0L17.2 13Z" fill="#3d9560"/>
</svg>
<div class="b" style="left:0px;top:220px;width:592px;height:20px;background:#f2f2f2">
</div>
<div class="t " style="left:6px;top:223px;color:#333">Headlights - Dual-Beam</div>
<div class="t " style="left:147px;top:223px;color:#333">Accessories</div>
<div class="t r" style="left:224px;top:223px;width:56px;color:#e23a48">$120K</div>
<div class="t r" style="left:285px;top:223px;width:84px;color:#3d9560;letter-spacing:0.35px">+7.94%</div>
<svg class="i" style="left:372px;top:225.5px" width="18" height="13" viewBox="0 0 18 13" >
<path d="M0 13L8.6 0L17.2 13Z" fill="#3d9560"/>
</svg>
<div class="t r" style="left:396px;top:223px;width:86px;color:#333;letter-spacing:0">3.43K</div>
<div class="t r" style="left:487px;top:223px;width:77px;color:#3d9560;letter-spacing:0">+252</div>
<svg class="i" style="left:568px;top:225.5px" width="18" height="13" viewBox="0 0 18 13" >
<path d="M0 13L8.6 0L17.2 13Z" fill="#3d9560"/>
</svg>
<div class="t " style="left:6px;top:243px;color:#333">Headlights - Weatherproof</div>
<div class="t " style="left:147px;top:243px;color:#333">Accessories</div>
<div class="t r" style="left:224px;top:243px;width:56px;color:#e23a48">$161K</div>
<div class="t r" style="left:285px;top:243px;width:84px;color:#e23a48;letter-spacing:0.35px">-3.32%</div>
<svg class="i" style="left:372px;top:245px" width="18" height="13" viewBox="0 0 18 13" >
<path d="M0 0H17.2L8.6 13Z" fill="#e23a48"/>
</svg>
<div class="t r" style="left:396px;top:243px;width:86px;color:#333;letter-spacing:0">3.58K</div>
<div class="t r" style="left:487px;top:243px;width:77px;color:#e23a48;letter-spacing:0">-123</div>
<svg class="i" style="left:568px;top:245px" width="18" height="13" viewBox="0 0 18 13" >
<path d="M0 0H17.2L8.6 13Z" fill="#e23a48"/>
</svg>
<div class="b" style="left:0px;top:260px;width:592px;height:20px;background:#f2f2f2">
</div>
<div class="t " style="left:6px;top:263px;color:#333">Hitch Rack - 4-Bike</div>
<div class="t " style="left:147px;top:263px;color:#333">Accessories</div>
<div class="t r" style="left:224px;top:263px;width:56px;color:#e23a48">$453K</div>
<div class="t r" style="left:285px;top:263px;width:84px;color:#3d9560;letter-spacing:0.35px">+3.91%</div>
<svg class="i" style="left:372px;top:265.5px" width="18" height="13" viewBox="0 0 18 13" >
<path d="M0 13L8.6 0L17.2 13Z" fill="#3d9560"/>
</svg>
<div class="t r" style="left:396px;top:263px;width:86px;color:#333;letter-spacing:0">3.77K</div>
<div class="t r" style="left:487px;top:263px;width:77px;color:#3d9560;letter-spacing:0">+142</div>
<svg class="i" style="left:568px;top:265.5px" width="18" height="13" viewBox="0 0 18 13" >
<path d="M0 13L8.6 0L17.2 13Z" fill="#3d9560"/>
</svg>
<div class="t " style="left:6px;top:283px;color:#333">HL Bottom Bracket</div>
<div class="t " style="left:147px;top:283px;color:#333">Components</div>
<div class="t r" style="left:224px;top:283px;width:56px;color:#e23a48">$437K</div>
<div class="t r" style="left:285px;top:283px;width:84px;color:#3d9560;letter-spacing:0.35px">+5.49%</div>
<svg class="i" style="left:372px;top:285.5px" width="18" height="13" viewBox="0 0 18 13" >
<path d="M0 13L8.6 0L17.2 13Z" fill="#3d9560"/>
</svg>
<div class="t r" style="left:396px;top:283px;width:86px;color:#333;letter-spacing:0">3.59K</div>
<div class="t r" style="left:487px;top:283px;width:77px;color:#3d9560;letter-spacing:0">+187</div>
<svg class="i" style="left:568px;top:285.5px" width="18" height="13" viewBox="0 0 18 13" >
<path d="M0 13L8.6 0L17.2 13Z" fill="#3d9560"/>
</svg>
<div class="b" style="left:0px;top:300px;width:592px;height:20px;background:#f2f2f2">
</div>
<div class="t " style="left:6px;top:303px;color:#333">HL Crankset</div>
<div class="t " style="left:147px;top:303px;color:#333">Components</div>
<div class="t r" style="left:224px;top:303px;width:56px;color:#56a346">$1.68M</div>
<div class="t r" style="left:285px;top:303px;width:84px;color:#3d9560;letter-spacing:0.35px">+9.04%</div>
<svg class="i" style="left:372px;top:305.5px" width="18" height="13" viewBox="0 0 18 13" >
<path d="M0 13L8.6 0L17.2 13Z" fill="#3d9560"/>
</svg>
<div class="t r" style="left:396px;top:303px;width:86px;color:#333;letter-spacing:0">4.15K</div>
<div class="t r" style="left:487px;top:303px;width:77px;color:#3d9560;letter-spacing:0">+344</div>
<svg class="i" style="left:568px;top:305.5px" width="18" height="13" viewBox="0 0 18 13" >
<path d="M0 13L8.6 0L17.2 13Z" fill="#3d9560"/>
</svg>
<div class="t " style="left:6px;top:323px;color:#333">HL Fork</div>
<div class="t " style="left:147px;top:323px;color:#333">Components</div>
<div class="t r" style="left:224px;top:323px;width:56px;color:#e23a48">$960K</div>
<div class="t r" style="left:285px;top:323px;width:84px;color:#3d9560;letter-spacing:0.35px">+3.21%</div>
<svg class="i" style="left:372px;top:325.5px" width="18" height="13" viewBox="0 0 18 13" >
<path d="M0 13L8.6 0L17.2 13Z" fill="#3d9560"/>
</svg>
<div class="t r" style="left:396px;top:323px;width:86px;color:#333;letter-spacing:0">4.18K</div>
<div class="t r" style="left:487px;top:323px;width:77px;color:#3d9560;letter-spacing:0">+130</div>
<svg class="i" style="left:568px;top:325.5px" width="18" height="13" viewBox="0 0 18 13" >
<path d="M0 13L8.6 0L17.2 13Z" fill="#3d9560"/>
</svg>
<div class="b" style="left:0px;top:340px;width:592px;height:20px;background:#f2f2f2">
</div>
<div class="t " style="left:6px;top:343px;color:#333">HL Headset</div>
<div class="t " style="left:147px;top:343px;color:#333">Components</div>
<div class="t r" style="left:224px;top:343px;width:56px;color:#e23a48">$459K</div>
<div class="t r" style="left:285px;top:343px;width:84px;color:#3d9560;letter-spacing:0.35px">+1.38%</div>
<svg class="i" style="left:372px;top:345.5px" width="18" height="13" viewBox="0 0 18 13" >
<path d="M0 13L8.6 0L17.2 13Z" fill="#3d9560"/>
</svg>
<div class="t r" style="left:396px;top:343px;width:86px;color:#333;letter-spacing:0">3.68K</div>
<div class="t r" style="left:487px;top:343px;width:77px;color:#3d9560;letter-spacing:0">+50</div>
<svg class="i" style="left:568px;top:345.5px" width="18" height="13" viewBox="0 0 18 13" >
<path d="M0 13L8.6 0L17.2 13Z" fill="#3d9560"/>
</svg>
<div class="t " style="left:6px;top:363px;color:#333">HL Mountain Frame</div>
<div class="b" style="left:120px;top:362px;width:16px;height:16px;background:#8cc63f;border-radius:8px">
</div>
<div class="t " style="left:147px;top:363px;color:#333">Components</div>
<div class="t r" style="left:224px;top:363px;width:56px;color:#56a346">$9.55M</div>
<div class="t r" style="left:285px;top:363px;width:84px;color:#3d9560;letter-spacing:0.35px">+2.02%</div>
<svg class="i" style="left:372px;top:365.5px" width="18" height="13" viewBox="0 0 18 13" >
<path d="M0 13L8.6 0L17.2 13Z" fill="#3d9560"/>
</svg>
<div class="t r" style="left:396px;top:363px;width:86px;color:#333;letter-spacing:0">7.04K</div>
<div class="t r" style="left:487px;top:363px;width:77px;color:#3d9560;letter-spacing:0">+140</div>
<svg class="i" style="left:568px;top:365.5px" width="18" height="13" viewBox="0 0 18 13" >
<path d="M0 13L8.6 0L17.2 13Z" fill="#3d9560"/>
</svg>
<div class="b" style="left:0px;top:380px;width:592px;height:20px;background:#f2f2f2">
</div>
<div class="t " style="left:6px;top:383px;color:#333">HL Mountain Front Wheel</div>
<div class="t " style="left:147px;top:383px;color:#333">Components</div>
<div class="t r" style="left:224px;top:383px;width:56px;color:#e23a48">$1.05M</div>
<div class="t r" style="left:285px;top:383px;width:84px;color:#3d9560;letter-spacing:0.35px">+1.69%</div>
<svg class="i" style="left:372px;top:385.5px" width="18" height="13" viewBox="0 0 18 13" >
<path d="M0 13L8.6 0L17.2 13Z" fill="#3d9560"/>
</svg>
<div class="t r" style="left:396px;top:383px;width:86px;color:#333;letter-spacing:0">3.49K</div>
<div class="t r" style="left:487px;top:383px;width:77px;color:#3d9560;letter-spacing:0">+58</div>
<svg class="i" style="left:568px;top:385.5px" width="18" height="13" viewBox="0 0 18 13" >
<path d="M0 13L8.6 0L17.2 13Z" fill="#3d9560"/>
</svg>
<div class="t " style="left:6px;top:403px;color:#333">HL Mountain Handlebars</div>
<div class="t " style="left:147px;top:403px;color:#333">Components</div>
<div class="t r" style="left:224px;top:403px;width:56px;color:#e23a48">$444K</div>
<div class="t r" style="left:285px;top:403px;width:84px;color:#3d9560;letter-spacing:0.35px">+3.02%</div>
<svg class="i" style="left:372px;top:405.5px" width="18" height="13" viewBox="0 0 18 13" >
<path d="M0 13L8.6 0L17.2 13Z" fill="#3d9560"/>
</svg>
<div class="t r" style="left:396px;top:403px;width:86px;color:#333;letter-spacing:0">3.69K</div>
<div class="t r" style="left:487px;top:403px;width:77px;color:#3d9560;letter-spacing:0">+108</div>
<svg class="i" style="left:568px;top:405.5px" width="18" height="13" viewBox="0 0 18 13" >
<path d="M0 13L8.6 0L17.2 13Z" fill="#3d9560"/>
</svg>
<div class="b" style="left:0px;top:420px;width:592px;height:20px;background:#f2f2f2">
</div>
<div class="t " style="left:6px;top:423px;color:#333">HL Mountain Saddle</div>
<div class="t " style="left:147px;top:423px;color:#333">Components</div>
<div class="t r" style="left:224px;top:423px;width:56px;color:#e23a48">$307K</div>
<div class="t r" style="left:285px;top:423px;width:84px;color:#3d9560;letter-spacing:0.35px">+2.14%</div>
<svg class="i" style="left:372px;top:425.5px" width="18" height="13" viewBox="0 0 18 13" >
<path d="M0 13L8.6 0L17.2 13Z" fill="#3d9560"/>
</svg>
<div class="t r" style="left:396px;top:423px;width:86px;color:#333;letter-spacing:0">3.54K</div>
<div class="t r" style="left:487px;top:423px;width:77px;color:#3d9560;letter-spacing:0">+74</div>
<svg class="i" style="left:568px;top:425.5px" width="18" height="13" viewBox="0 0 18 13" >
<path d="M0 13L8.6 0L17.2 13Z" fill="#3d9560"/>
</svg>
</div>
<div class="b" style="left:436px;top:240px;width:591px;height:20px;border:1px dotted #333">
</div>
<div class="b" style="left:1028px;top:240px;width:16px;height:427px;background:#f2f2f2">
</div>
<svg class="i" style="left:1032px;top:246px" width="7" height="5" viewBox="0 0 7 5" >
<path d="M0 5L3.5 0L7 5Z" fill="#7d7d7d"/>
</svg>
<div class="b" style="left:1028px;top:257px;width:16px;height:68px;background:#dadada">
</div>
<svg class="i" style="left:1032px;top:655px" width="7" height="5" viewBox="0 0 7 5" >
<path d="M0 0H7L3.5 5Z" fill="#7d7d7d"/>
</svg>
<div class="b" style="left:436px;top:667px;width:608px;height:1px;background:#d0d0d0">
</div>
<div class="t bd r" style="left:600px;top:675px;width:117px;color:#333;letter-spacing:0.8px">Sum =...</div>
<div class="t bd r" style="left:800px;top:675px;width:117.5px;color:#333;letter-spacing:0.55px">Sum = 461K</div>
<svg class="i" style="left:1404px;top:183px" width="16" height="16" viewBox="0 0 16 16" >
<path d="M4.7 5.9H1V14.9H15V5.9H11.3" fill="none" stroke="#6e6e6e" stroke-width="2"/>
<rect x="7" y="2.6" width="2" height="8.4" fill="#6e6e6e"/>
<path d="M8 0L10.8 3.1H5.2Z" fill="#6e6e6e"/>
</svg>
<div class="b" style="left:1051px;top:214px;width:177px;height:102px;background:#fff;border:1px solid #d6d6d6">
</div>
<div class="t c" style="left:1051px;top:241px;width:177px;font-size:21px;line-height:26px;height:26px;top:235px;color:#2f9262;letter-spacing:0.7px">+$6.24M</div>
<div class="t c" style="left:1051px;top:265px;width:177px;font-size:12px;color:#8c8c8c;letter-spacing:0.2px">$159M</div>
<div class="t c" style="left:1051px;top:281px;width:177px;font-size:12px;color:#8c8c8c;letter-spacing:0.1px">Revenue YTD</div>
<div class="b" style="left:1234px;top:214px;width:177px;height:102px;background:#fff;border:1px solid #d6d6d6">
</div>
<div class="t c" style="left:1234px;top:241px;width:177px;font-size:21px;line-height:26px;height:26px;top:235px;color:#2f9262;letter-spacing:0.7px">+$15.3K</div>
<div class="t c" style="left:1234px;top:265px;width:177px;font-size:12px;color:#8c8c8c;letter-spacing:0.2px">$30.6M</div>
<div class="t c" style="left:1234px;top:281px;width:177px;font-size:12px;color:#8c8c8c;letter-spacing:0.1px">Expenses YTD</div>
<div class="b" style="left:1051px;top:322px;width:177px;height:102px;background:#fff;border:1px solid #d6d6d6">
</div>
<div class="t c" style="left:1051px;top:349px;width:177px;font-size:21px;line-height:26px;height:26px;top:343px;color:#2f9262;letter-spacing:0.7px">+$6.23M</div>
<div class="t c" style="left:1051px;top:373px;width:177px;font-size:12px;color:#8c8c8c;letter-spacing:0.2px">$129M</div>
<div class="t c" style="left:1051px;top:389px;width:177px;font-size:12px;color:#8c8c8c;letter-spacing:0.1px">Profit YTD</div>
<div class="b" style="left:1234px;top:322px;width:177px;height:102px;background:#fff;border:1px solid #d6d6d6">
</div>
<div class="t c" style="left:1234px;top:349px;width:177px;font-size:21px;line-height:26px;height:26px;top:343px;color:#2f9262;letter-spacing:0.7px">+$114K</div>
<div class="t c" style="left:1234px;top:373px;width:177px;font-size:12px;color:#8c8c8c;letter-spacing:0.2px">$955K</div>
<div class="t c" style="left:1234px;top:389px;width:177px;font-size:12px;color:#8c8c8c;letter-spacing:0.1px">Avg Order Size</div>
<svg class="i" style="left:1420px;top:217px" width="7" height="5" viewBox="0 0 7 5" >
<path d="M0 5L3.5 0L7 5Z" fill="#6a6a6a"/>
</svg>
<div class="b" style="left:1415px;top:228px;width:17px;height:120px;background:#dadada">
</div>
<svg class="i" style="left:1420px;top:416px" width="7" height="5" viewBox="0 0 7 5" >
<path d="M0 0H7L3.5 5Z" fill="#6a6a6a"/>
</svg>
<div class="b" style="left:1051px;top:430px;width:378px;height:267px;background:#fff;border:1px solid #d6d6d6">
</div>
<div class="t bd" style="left:1058px;top:438px;color:#333">Product Categories - YTD Sales</div>
<svg class="i" style="left:1372px;top:437px" width="16" height="16" viewBox="0 0 16 16" >
<path d="M4.7 5.9H1V14.9H15V5.9H11.3" fill="none" stroke="#6e6e6e" stroke-width="2"/>
<rect x="7" y="2.6" width="2" height="8.4" fill="#6e6e6e"/>
<path d="M8 0L10.8 3.1H5.2Z" fill="#6e6e6e"/>
</svg>
<svg class="i" style="left:1405px;top:438px" width="14" height="14" viewBox="0 0 14 14" >
<path d="M0 0H5L3.4 1.6L5.6 3.8L3.8 5.6L1.6 3.4L0 5Z" fill="#6e6e6e"/>
<path d="M14 0H9L10.6 1.6L8.4 3.8L10.2 5.6L12.4 3.4L14 5Z" fill="#6e6e6e"/>
<path d="M0 14H5L3.4 12.4L5.6 10.2L3.8 8.4L1.6 10.6L0 9Z" fill="#6e6e6e"/>
<path d="M14 14H9L10.6 12.4L8.4 10.2L10.2 8.4L12.4 10.6L14 9Z" fill="#6e6e6e"/>
</svg>
<svg class="i" style="left:0;top:0" width="1440" height="1000" viewBox="0 0 1440 1000">
<path d="M1306.64 564.28A67.7 67.7 0 0 1 1307.30 573.70L1280.50 573.70A40.9 40.9 0 0 0 1280.10 568.01Z" fill="#5c8791" stroke="#e6d6d6" stroke-width="0.5"/>
<path d="M1307.30 573.70A67.7 67.7 0 0 1 1201.94 629.96L1216.85 607.69A40.9 40.9 0 0 0 1280.50 573.70Z" fill="#955f75" stroke="#e6d6d6" stroke-width="0.5"/>
<path d="M1201.94 629.96A67.7 67.7 0 0 1 1197.27 626.54L1214.03 605.62A40.9 40.9 0 0 0 1216.85 607.69Z" fill="#b08d55" stroke="#e6d6d6" stroke-width="0.5"/>
<path d="M1197.27 626.54A67.7 67.7 0 1 1 1306.64 564.28L1280.10 568.01A40.9 40.9 0 1 0 1214.03 605.62Z" fill="#bb4d55" stroke="#e6d6d6" stroke-width="0.5"/>
<path d="M1150 505.5H1201L1206.2 514.3" fill="none" stroke="#a8434c"/>
<path d="M1317 567.4L1306 569.1" fill="none" stroke="#4f7f8c"/>
<path d="M1165 635.5H1194.3L1199.5 628.3" fill="none" stroke="#9c7b47"/>
<path d="M1294.4 641.5H1277.3L1272 634" fill="none" stroke="#834f66"/>
</svg>
<div class="b" style="left:1076px;top:497px;width:74px;height:16px;border:1px solid #a8434c;background:#fff;color:#a8434c;font-size:11px;line-height:13px;text-align:center;white-space:nowrap;letter-spacing:0.05px;padding-top:1px">Bikes: $98.7M</div>
<div class="b" style="left:1317px;top:546px;width:87px;height:29px;border:1px solid #4f7f8c;background:#fff;color:#4f7f8c;font-size:11px;line-height:13px;text-align:center;white-space:nowrap;letter-spacing:0.05px;padding-top:1px">Accessories:<br>$3.54M</div>
<div class="b" style="left:1076px;top:627px;width:89px;height:16px;border:1px solid #9c7b47;background:#fff;color:#9c7b47;font-size:11px;line-height:13px;text-align:center;white-space:nowrap;letter-spacing:0.05px;padding-top:1px">Clothing: $2.18M</div>
<div class="b" style="left:1294px;top:633px;width:110px;height:16px;border:1px solid #834f66;background:#fff;color:#834f66;font-size:11px;line-height:13px;text-align:center;white-space:nowrap;letter-spacing:0.05px;padding-top:1px">Components: $54.7M</div>
<div class="b" style="left:435px;top:703px;width:610px;height:283px;background:#fff;border:1px solid #d6d6d6">
</div>
<div class="t bd" style="left:443px;top:711px;color:#333">Top 5 Products - Monthly Sales</div>
<svg class="i" style="left:988px;top:710px" width="16" height="16" viewBox="0 0 16 16" >
<path d="M4.7 5.9H1V14.9H15V5.9H11.3" fill="none" stroke="#6e6e6e" stroke-width="2"/>
<rect x="7" y="2.6" width="2" height="8.4" fill="#6e6e6e"/>
<path d="M8 0L10.8 3.1H5.2Z" fill="#6e6e6e"/>
</svg>
<svg class="i" style="left:1021px;top:711px" width="14" height="14" viewBox="0 0 14 14" >
<path d="M0 0H5L3.4 1.6L5.6 3.8L3.8 5.6L1.6 3.4L0 5Z" fill="#6e6e6e"/>
<path d="M14 0H9L10.6 1.6L8.4 3.8L10.2 5.6L12.4 3.4L14 5Z" fill="#6e6e6e"/>
<path d="M0 14H5L3.4 12.4L5.6 10.2L3.8 8.4L1.6 10.6L0 9Z" fill="#6e6e6e"/>
<path d="M14 14H9L10.6 12.4L8.4 10.2L10.2 8.4L12.4 10.6L14 9Z" fill="#6e6e6e"/>
</svg>
<div class="b" style="left:513px;top:763px;width:18px;height:14px;background:#5f9aa6;border:1px solid rgba(0,0,0,0.12)">
</div>
<div class="t ls0" style="left:536px;top:763px;color:#444">Mountain-100</div>
<div class="b" style="left:611px;top:763px;width:18px;height:14px;background:#1aaee8;border:1px solid rgba(0,0,0,0.12)">
</div>
<div class="t ls0" style="left:634px;top:763px;color:#444">Mountain-200</div>
<div class="b" style="left:709px;top:763px;width:18px;height:14px;background:#e2a651;border:1px solid rgba(0,0,0,0.12)">
</div>
<div class="t ls0" style="left:732px;top:763px;color:#444">Road-150</div>
<div class="b" style="left:787px;top:763px;width:18px;height:14px;background:#5470bf;border:1px solid rgba(0,0,0,0.12)">
</div>
<div class="t ls0" style="left:810px;top:763px;color:#444">HL Mountain Frame</div>
<div class="b" style="left:914px;top:763px;width:18px;height:14px;background:#b7ccd4;border:1px solid rgba(0,0,0,0.12)">
</div>
<div class="t ls0" style="left:937px;top:763px;color:#444">Touring-1000</div>
<svg class="i" style="left:0;top:0" width="1440" height="1000" viewBox="0 0 1440 1000">
<rect x="497.5" y="798.5" width="517" height="139" fill="#fff" stroke="#d0d0d0"/>
<rect x="492" y="937" width="522" height="1" fill="#cfcfcf"/>
<rect x="492" y="906" width="522" height="1" fill="#cfcfcf"/>
<rect x="492" y="875" width="522" height="1" fill="#cfcfcf"/>
<rect x="492" y="844" width="522" height="1" fill="#cfcfcf"/>
<rect x="492" y="813" width="522" height="1" fill="#cfcfcf"/>
<rect x="494" y="927" width="3" height="1" fill="#d0d0d0"/>
<rect x="494" y="916" width="3" height="1" fill="#d0d0d0"/>
<rect x="494" y="896" width="3" height="1" fill="#d0d0d0"/>
<rect x="494" y="885" width="3" height="1" fill="#d0d0d0"/>
<rect x="494" y="865" width="3" height="1" fill="#d0d0d0"/>
<rect x="494" y="854" width="3" height="1" fill="#d0d0d0"/>
<rect x="494" y="834" width="3" height="1" fill="#d0d0d0"/>
<rect x="494" y="823" width="3" height="1" fill="#d0d0d0"/>
<rect x="494" y="803" width="3" height="1" fill="#d0d0d0"/>
<rect x="502" y="938" width="1" height="2" fill="#c4c4c4"/>
<rect x="519" y="938" width="1" height="5" fill="#c4c4c4"/>
<rect x="536" y="938" width="1" height="2" fill="#c4c4c4"/>
<rect x="553" y="938" width="1" height="2" fill="#c4c4c4"/>
<rect x="570" y="938" width="1" height="2" fill="#c4c4c4"/>
<rect x="588" y="938" width="1" height="2" fill="#c4c4c4"/>
<rect x="605" y="938" width="1" height="5" fill="#c4c4c4"/>
<rect x="622" y="938" width="1" height="2" fill="#c4c4c4"/>
<rect x="639" y="938" width="1" height="2" fill="#c4c4c4"/>
<rect x="657" y="938" width="1" height="2" fill="#c4c4c4"/>
<rect x="674" y="938" width="1" height="2" fill="#c4c4c4"/>
<rect x="691" y="938" width="1" height="5" fill="#c4c4c4"/>
<rect x="708" y="938" width="1" height="2" fill="#c4c4c4"/>
<rect x="726" y="938" width="1" height="2" fill="#c4c4c4"/>
<rect x="743" y="938" width="1" height="2" fill="#c4c4c4"/>
<rect x="760" y="938" width="1" height="2" fill="#c4c4c4"/>
<rect x="777" y="938" width="1" height="5" fill="#c4c4c4"/>
<rect x="795" y="938" width="1" height="2" fill="#c4c4c4"/>
<rect x="812" y="938" width="1" height="2" fill="#c4c4c4"/>
<rect x="829" y="938" width="1" height="2" fill="#c4c4c4"/>
<rect x="846" y="938" width="1" height="2" fill="#c4c4c4"/>
<rect x="864" y="938" width="1" height="5" fill="#c4c4c4"/>
<rect x="881" y="938" width="1" height="2" fill="#c4c4c4"/>
<rect x="898" y="938" width="1" height="2" fill="#c4c4c4"/>
<rect x="915" y="938" width="1" height="2" fill="#c4c4c4"/>
<rect x="932" y="938" width="1" height="2" fill="#c4c4c4"/>
<rect x="950" y="938" width="1" height="5" fill="#c4c4c4"/>
<rect x="967" y="938" width="1" height="2" fill="#c4c4c4"/>
<rect x="984" y="938" width="1" height="2" fill="#c4c4c4"/>
<rect x="1001" y="938" width="1" height="2" fill="#c4c4c4"/>
<rect x="502" y="856.28" width="6" height="81.22" fill="#5f9aa6"/>
<rect x="509" y="882.32" width="6" height="55.18" fill="#1aaee8"/>
<rect x="516" y="894.72" width="6" height="42.78" fill="#e2a651"/>
<rect x="523" y="901.54" width="6" height="35.96" fill="#5470bf"/>
<rect x="530" y="909.60" width="6" height="27.90" fill="#b7ccd4"/>
<rect x="545" y="849.46" width="6" height="88.04" fill="#5f9aa6"/>
<rect x="552" y="875.50" width="6" height="62.00" fill="#1aaee8"/>
<rect x="559" y="889.14" width="6" height="48.36" fill="#e2a651"/>
<rect x="566" y="898.44" width="6" height="39.06" fill="#5470bf"/>
<rect x="573" y="906.50" width="6" height="31.00" fill="#b7ccd4"/>
<rect x="588" y="844.50" width="6" height="93.00" fill="#5f9aa6"/>
<rect x="595" y="869.30" width="6" height="68.20" fill="#1aaee8"/>
<rect x="602" y="886.04" width="6" height="51.46" fill="#e2a651"/>
<rect x="609" y="895.34" width="6" height="42.16" fill="#5470bf"/>
<rect x="616" y="904.33" width="6" height="33.17" fill="#b7ccd4"/>
<rect x="631" y="842.33" width="6" height="95.17" fill="#5f9aa6"/>
<rect x="638" y="864.96" width="6" height="72.54" fill="#1aaee8"/>
<rect x="645" y="880.46" width="6" height="57.04" fill="#e2a651"/>
<rect x="652" y="894.72" width="6" height="42.78" fill="#5470bf"/>
<rect x="659" y="903.40" width="6" height="34.10" fill="#b7ccd4"/>
<rect x="674" y="836.44" width="6" height="101.06" fill="#5f9aa6"/>
<rect x="681" y="861.24" width="6" height="76.26" fill="#1aaee8"/>
<rect x="688" y="879.22" width="6" height="58.28" fill="#e2a651"/>
<rect x="695" y="892.24" width="6" height="45.26" fill="#5470bf"/>
<rect x="702" y="902.16" width="6" height="35.34" fill="#b7ccd4"/>
<rect x="718" y="831.48" width="6" height="106.02" fill="#5f9aa6"/>
<rect x="725" y="858.14" width="6" height="79.36" fill="#1aaee8"/>
<rect x="732" y="877.98" width="6" height="59.52" fill="#e2a651"/>
<rect x="739" y="888.52" width="6" height="48.98" fill="#5470bf"/>
<rect x="746" y="901.54" width="6" height="35.96" fill="#b7ccd4"/>
<rect x="761" y="823.42" width="6" height="114.08" fill="#5f9aa6"/>
<rect x="768" y="850.08" width="6" height="87.42" fill="#1aaee8"/>
<rect x="775" y="877.36" width="6" height="60.14" fill="#e2a651"/>
<rect x="782" y="884.80" width="6" height="52.70" fill="#5470bf"/>
<rect x="789" y="900.30" width="6" height="37.20" fill="#b7ccd4"/>
<rect x="804" y="815.98" width="6" height="121.52" fill="#5f9aa6"/>
<rect x="811" y="848.22" width="6" height="89.28" fill="#1aaee8"/>
<rect x="818" y="875.50" width="6" height="62.00" fill="#e2a651"/>
<rect x="825" y="883.25" width="6" height="54.25" fill="#5470bf"/>
<rect x="832" y="898.44" width="6" height="39.06" fill="#b7ccd4"/>
<rect x="847" y="813.50" width="6" height="124.00" fill="#5f9aa6"/>
<rect x="854" y="844.50" width="6" height="93.00" fill="#1aaee8"/>
<rect x="861" y="873.64" width="6" height="63.86" fill="#e2a651"/>
<rect x="868" y="881.08" width="6" height="56.42" fill="#5470bf"/>
<rect x="875" y="894.72" width="6" height="42.78" fill="#b7ccd4"/>
<rect x="890" y="817.22" width="6" height="120.28" fill="#5f9aa6"/>
<rect x="897" y="844.50" width="6" height="93.00" fill="#1aaee8"/>
<rect x="904" y="871.16" width="6" height="66.34" fill="#e2a651"/>
<rect x="911" y="880.46" width="6" height="57.04" fill="#5470bf"/>
<rect x="918" y="891.62" width="6" height="45.88" fill="#b7ccd4"/>
<rect x="933" y="811.64" width="6" height="125.86" fill="#5f9aa6"/>
<rect x="940" y="836.44" width="6" height="101.06" fill="#1aaee8"/>
<rect x="947" y="868.06" width="6" height="69.44" fill="#e2a651"/>
<rect x="954" y="877.36" width="6" height="60.14" fill="#5470bf"/>
<rect x="961" y="890.38" width="6" height="47.12" fill="#b7ccd4"/>
<rect x="976" y="811.64" width="6" height="125.86" fill="#5f9aa6"/>
<rect x="983" y="838.30" width="6" height="99.20" fill="#1aaee8"/>
<rect x="990" y="869.30" width="6" height="68.20" fill="#e2a651"/>
<rect x="997" y="880.46" width="6" height="57.04" fill="#5470bf"/>
<rect x="1004" y="890.38" width="6" height="47.12" fill="#b7ccd4"/>
<rect x="497" y="937" width="518" height="1" fill="#c4c4c4"/>
<rect x="497" y="798" width="1" height="139" fill="#c4c4c4"/>
</svg>
<div class="t r ls0" style="left:440px;top:930px;width:46px;color:#444">0M</div>
<div class="t r ls0" style="left:440px;top:899px;width:46px;color:#444">0.5M</div>
<div class="t r ls0" style="left:440px;top:868px;width:46px;color:#444">1M</div>
<div class="t r ls0" style="left:440px;top:837px;width:46px;color:#444">1.5M</div>
<div class="t r ls0" style="left:440px;top:806px;width:46px;color:#444">2M</div>
<div class="t c ls0" style="left:479.5px;top:946px;width:80px;color:#444">January</div>
<div class="t c ls0" style="left:565.7px;top:946px;width:80px;color:#444">March</div>
<div class="t c ls0" style="left:651.9px;top:946px;width:80px;color:#444">May</div>
<div class="t c ls0" style="left:738.1px;top:946px;width:80px;color:#444">July</div>
<div class="t c ls0" style="left:824.3px;top:946px;width:80px;color:#444">September</div>
<div class="t c ls0" style="left:910.5px;top:946px;width:80px;color:#444">November</div>
<div class="b" style="left:1051px;top:703px;width:378px;height:283px;background:#fff;border:1px solid #d6d6d6">
</div>
<div class="t bd" style="left:1058px;top:711px;color:#333;letter-spacing:0.42px">Sales by State - Revenue YTD</div>
<svg class="i" style="left:1308px;top:710px" width="16" height="16" viewBox="0 0 16 16" >
<path d="M4.7 5.9H1V14.9H15V5.9H11.3" fill="none" stroke="#6e6e6e" stroke-width="2"/>
<rect x="7" y="2.6" width="2" height="8.4" fill="#6e6e6e"/>
<path d="M8 0L10.8 3.1H5.2Z" fill="#6e6e6e"/>
</svg>
<svg class="i" style="left:1340px;top:710px" width="16" height="16" viewBox="0 0 16 16" >
<path d="M0.4 9.6L8 15.7L15.6 9.6L8 3.6Z" fill="#bdbdbd"/>
<path d="M0.4 6L8 0L15.6 6L8 12Z" fill="#7b7b7b"/>
</svg>
<svg class="i" style="left:1372px;top:711px" width="16" height="15" viewBox="0 0 16 15" >
<path d="M0.2 0H15.5L9 7.5V14.6H7V7.5Z" fill="#bdbdbd"/>
<path d="M10.3 9.8L15.3 14.6M15.3 9.8L10.3 14.6" stroke="#bdbdbd" stroke-width="1.1"/>
</svg>
<svg class="i" style="left:1405px;top:711px" width="14" height="14" viewBox="0 0 14 14" >
<path d="M0 0H5L3.4 1.6L5.6 3.8L3.8 5.6L1.6 3.4L0 5Z" fill="#6e6e6e"/>
<path d="M14 0H9L10.6 1.6L8.4 3.8L10.2 5.6L12.4 3.4L14 5Z" fill="#6e6e6e"/>
<path d="M0 14H5L3.4 12.4L5.6 10.2L3.8 8.4L1.6 10.6L0 9Z" fill="#6e6e6e"/>
<path d="M14 14H9L10.6 12.4L8.4 10.2L10.2 8.4L12.4 10.6L14 9Z" fill="#6e6e6e"/>
</svg>
<svg class="i" style="left:1052px;top:733px;overflow:hidden" width="376" height="252" viewBox="0 0 376 252">
<style>.ml{font:bold 12.5px "Liberation Sans",sans-serif;fill:#4a4a4a;stroke:#fff;stroke-width:3.8px;paint-order:stroke;stroke-linejoin:round}</style>
<defs>
<pattern id="hz" width="4.55" height="4.55" patternUnits="userSpaceOnUse" patternTransform="rotate(-45)">
<rect width="4.55" height="4.55" fill="#838daa"/>
<rect width="4.55" height="1.4" fill="#a1a9c1"/>
</pattern>
</defs>
<path d="M-2.0 -3.0L74.9 -3.0L74.9 0.0L75.8 7.0L77.4 17.0L79.2 27.0L80.2 37.0L81.1 44.5L81.5 49.1L-2.0 49.1Z" fill="#d3d3d3" stroke="#fff" stroke-width="0.9" stroke-linejoin="round"/>
<path d="M-2.0 49.1L81.5 49.1L79.9 52.0L78.6 54.8L81.1 57.6L82.4 62.0L83.0 72.0L83.0 87.2L81.5 92.0L81.1 97.0L80.8 101.0L78.0 99.1L74.2 97.2L70.5 96.6L66.1 97.9L63.0 97.0L59.9 95.4L-2.0 95.4Z" fill="url(#hz)" stroke="#fff" stroke-width="0.9" stroke-linejoin="round"/>
<path d="M74.9 -3.0L101.8 -3.0L101.8 0.0L102.4 2.2L106.8 3.2L110.5 5.1L114.2 6.4L118.0 5.5L123.0 5.8L125.5 7.6L130.5 9.5L134.2 12.6L139.2 14.5L145.5 13.9L151.8 13.9L156.1 15.8L153.0 18.2L148.0 21.4L143.0 25.8L138.0 30.1L134.2 33.2L129.9 37.0L126.1 43.2L124.2 48.2L123.6 55.8L124.2 62.0L126.1 67.0L130.5 70.8L135.5 74.5L139.2 78.2L140.5 83.2L140.5 87.5L83.0 87.5L83.0 72.0L82.4 62.0L81.1 57.6L78.6 54.8L79.9 52.0L81.5 49.1L81.1 44.5L80.2 37.0L79.2 27.0L77.4 17.0L75.8 7.0L74.9 0.0Z" fill="#838daa" stroke="#fff" stroke-width="0.9" stroke-linejoin="round"/>
<path d="M129.9 37.0L135.5 35.8L140.5 34.5L144.9 33.2L145.5 37.0L151.8 38.9L154.2 42.0L160.5 44.5L166.8 46.4L173.0 48.2L176.8 50.8L178.6 55.8L180.5 59.5L181.8 62.0L185.5 61.4L188.0 60.8L185.5 65.1L182.4 70.1L179.9 77.0L178.6 84.5L178.0 92.0L178.0 100.8L178.6 103.2L149.2 103.2L147.4 100.8L144.2 97.0L141.8 92.0L140.5 87.5L140.5 83.2L139.2 78.2L135.5 74.5L130.5 70.8L126.1 67.0L124.2 62.0L123.6 55.8L124.2 48.2L126.1 43.2Z" fill="#639ab9" stroke="#fff" stroke-width="0.9" stroke-linejoin="round"/>
<path d="M153.0 38.2L159.2 34.5L165.5 32.0L170.5 29.2L172.4 26.8L176.8 23.9L178.6 24.2L176.8 27.0L174.9 30.1L178.0 33.2L183.0 34.5L186.8 38.9L191.8 40.8L196.8 38.9L203.0 37.0L209.2 36.4L210.5 39.5L215.5 40.1L219.2 43.2L221.1 47.6L226.8 47.0L226.8 48.5L221.8 48.5L216.8 47.0L210.5 46.4L205.5 47.0L200.5 49.5L195.5 51.4L191.8 50.1L188.6 50.8L186.8 55.8L184.2 59.5L181.8 62.0L180.5 59.5L178.6 55.8L176.8 50.8L173.0 48.2L166.8 46.4L160.5 44.5L154.2 42.0Z" fill="#a0809c" stroke="#fff" stroke-width="0.9" stroke-linejoin="round"/>
<path d="M213.0 52.0L218.0 53.9L223.0 55.8L228.0 58.9L229.2 63.2L229.2 69.5L226.8 75.8L223.0 80.8L221.8 84.5L230.0 81.0L234.1 79.6L237.0 82.4L238.2 89.5L238.8 95.8L236.1 103.2L233.0 108.2L230.0 114.1L193.0 114.1L196.1 107.0L198.0 100.8L196.8 94.5L194.9 87.0L194.9 79.5L196.8 72.0L199.2 67.0L203.0 64.5L204.2 67.0L206.1 62.0L209.2 58.2L211.1 55.1Z" fill="#a0809c" stroke="#fff" stroke-width="0.9" stroke-linejoin="round"/>
<path d="M83.0 87.5L81.5 92.0L81.1 97.0L80.8 101.0L83.0 107.0L85.5 114.5L88.0 122.0L88.6 122.0L89.9 128.2L91.1 131.5L123.0 131.5L139.2 131.5L141.8 128.9L143.6 125.8L144.5 122.0L146.8 119.5L151.1 115.8L153.6 111.4L152.4 107.0L149.2 103.2L147.4 100.8L144.2 97.0L141.8 92.0L140.5 87.5Z" fill="#d3d3d3" stroke="#fff" stroke-width="0.9" stroke-linejoin="round"/>
<path d="M-2.0 95.4L59.9 95.4L63.0 97.0L66.1 97.9L70.5 96.6L74.2 97.2L78.0 99.1L80.8 101.0L83.0 107.0L85.5 114.5L88.0 122.0L88.6 122.0L89.9 128.2L91.1 131.5L94.9 137.6L97.0 140.5L20.5 140.5L20.5 125.8L-2.0 125.8Z" fill="#d3d3d3" stroke="#fff" stroke-width="0.9" stroke-linejoin="round"/>
<path d="M-2.0 125.8L20.5 125.8L20.5 183.2L-2.0 183.2Z" fill="#7393b3" stroke="#fff" stroke-width="0.9" stroke-linejoin="round"/>
<path d="M-2.0 183.2L9.0 183.2L9.0 254.5L-2.0 254.5Z" fill="#629abb" stroke="#fff" stroke-width="0.9" stroke-linejoin="round"/>
<path d="M20.5 140.5L97.0 140.5L99.9 143.9L98.6 146.4L101.1 150.1L103.8 153.2L103.8 183.8L20.5 183.8Z" fill="#d3d3d3" stroke="#fff" stroke-width="0.9" stroke-linejoin="round"/>
<path d="M9.0 183.8L103.8 183.8L104.2 197.0L105.2 209.5L105.0 229.2L100.5 228.0L96.8 225.5L91.8 226.8L85.5 228.8L80.5 226.2L74.2 227.5L68.0 225.5L63.0 223.0L56.8 222.5L51.8 220.5L48.0 218.8L43.6 216.8L42.4 215.1L42.4 190.5L9.0 190.5Z" fill="#d3d3d3" stroke="#fff" stroke-width="0.9" stroke-linejoin="round"/>
<path d="M9.0 190.5L42.4 190.5L42.4 215.1L43.6 216.8L48.0 218.8L51.8 220.5L56.8 222.5L63.0 223.0L68.0 225.5L74.2 227.5L80.5 226.2L85.5 228.8L91.8 226.8L96.8 225.5L100.5 228.0L105.0 229.2L109.2 230.5L109.2 254.5L9.0 254.5Z" fill="#f06272" stroke="#fff" stroke-width="0.9" stroke-linejoin="round"/>
<path d="M91.1 131.5L94.9 137.6L97.0 140.5L99.9 143.9L98.6 146.4L101.1 150.1L103.8 153.2L103.8 183.8L104.0 190.0L153.0 190.0L154.2 192.0L152.8 196.6L158.0 196.1L160.5 190.4L163.0 188.2L164.2 185.8L163.0 182.0L160.5 175.8L158.6 171.4L154.2 167.0L152.4 162.0L153.0 156.4L148.0 153.9L144.9 148.2L140.5 143.2L138.0 138.2L138.9 131.5Z" fill="#529dc0" stroke="#fff" stroke-width="0.9" stroke-linejoin="round"/>
<path d="M104.0 190.0L104.2 197.0L105.2 209.5L105.0 229.2L109.2 230.5L109.6 238.0L142.8 237.6L143.0 228.2L146.1 220.8L149.2 214.5L153.6 210.5L155.8 203.2L158.0 196.1L152.8 196.6L154.2 192.0L153.0 190.0Z" fill="#d3d3d3" stroke="#fff" stroke-width="0.9" stroke-linejoin="round"/>
<path d="M109.6 238.0L142.8 237.6L143.6 254.5L109.6 254.5Z" fill="#d3d3d3" stroke="#fff" stroke-width="0.9" stroke-linejoin="round"/>
<path d="M144.5 122.0L146.8 119.5L151.1 115.8L153.6 111.4L152.4 107.0L149.2 103.2L178.6 103.2L179.2 107.0L180.5 112.0L181.8 117.0L182.4 129.5L183.0 140.8L183.0 149.5L181.5 159.5L178.2 165.8L177.0 170.8L174.2 175.8L171.1 178.2L170.5 180.8L166.1 180.5L164.5 183.0L163.0 182.0L160.5 175.8L158.6 171.4L154.2 167.0L152.4 162.0L153.0 156.4L148.0 153.9L144.9 148.2L140.5 143.2L138.0 138.2L138.9 131.5L141.8 128.9L143.6 125.8Z" fill="#529dc0" stroke="#fff" stroke-width="0.9" stroke-linejoin="round"/>
<path d="M181.8 117.0L182.8 115.1L212.8 114.5L213.2 134.5L213.5 155.5L210.5 158.5L207.0 159.8L205.1 163.5L201.1 168.5L196.8 167.2L194.2 170.4L189.2 169.8L185.5 170.8L181.8 170.1L177.0 170.8L178.2 165.8L181.5 159.5L183.0 149.5L183.0 140.8L182.4 129.5Z" fill="#7393b3" stroke="#fff" stroke-width="0.9" stroke-linejoin="round"/>
<path d="M212.8 114.5L229.2 114.1L233.0 117.2L238.0 118.5L243.0 117.9L248.0 117.2L253.0 114.5L259.9 112.0L259.9 129.5L259.2 137.0L256.8 143.2L253.0 147.4L248.0 150.8L245.5 153.2L243.0 156.4L240.5 160.8L238.0 163.5L234.2 158.5L229.2 158.5L224.2 156.6L220.5 155.4L216.8 153.5L213.5 155.5L213.2 134.5Z" fill="#7393b3" stroke="#fff" stroke-width="0.9" stroke-linejoin="round"/>
<path d="M164.5 183.0L166.1 180.5L170.5 180.8L171.1 178.2L174.2 175.8L177.0 170.8L181.8 170.1L185.5 170.8L189.2 169.8L194.2 170.4L196.8 167.2L201.1 168.5L205.1 163.5L207.0 159.8L210.5 158.5L213.5 155.5L216.8 153.5L220.5 155.4L224.2 156.6L229.2 158.5L234.2 158.5L238.0 163.5L239.0 168.2L243.6 174.5L246.5 177.2L240.5 181.0L235.5 184.8L230.8 188.0L223.0 188.5L176.8 187.5L176.8 189.8L160.5 190.4L163.0 188.2L164.2 185.8Z" fill="#639ab9" stroke="#fff" stroke-width="0.9" stroke-linejoin="round"/>
<path d="M238.0 163.5L240.5 160.8L243.0 156.4L245.5 153.2L248.0 150.8L253.0 147.4L256.8 143.2L259.9 137.6L260.5 143.8L273.4 144.0L273.8 150.5L279.2 147.9L284.2 146.0L288.2 144.8L292.0 149.2L286.8 150.4L283.0 153.0L279.2 156.8L275.5 159.9L272.4 163.6L268.6 168.6L265.5 173.0L260.5 177.4L253.0 180.4L248.0 181.1L246.5 177.2L243.6 174.5L239.0 168.2Z" fill="#d3d3d3" stroke="#fff" stroke-width="0.9" stroke-linejoin="round"/>
<path d="M160.5 190.4L176.8 189.8L176.8 187.5L223.0 188.5L230.8 188.0L248.0 189.2L246.8 192.2L241.1 196.0L236.1 197.9L231.1 201.6L226.1 204.1L222.4 206.0L219.0 210.0L153.6 210.5L155.8 203.2L158.0 196.1Z" fill="#7393b3" stroke="#fff" stroke-width="0.9" stroke-linejoin="round"/>
<path d="M230.8 188.0L235.5 184.8L240.5 181.0L246.5 177.2L248.0 181.1L253.0 180.4L260.5 177.4L265.5 173.0L268.6 168.6L272.4 163.6L275.5 159.9L279.2 156.8L283.0 153.0L286.8 150.4L292.0 149.2L296.1 155.5L299.2 159.2L302.0 163.9L304.9 166.4L308.6 171.4L306.8 172.0L308.0 175.8L306.1 177.0L308.0 180.8L310.5 184.5L312.6 188.5L312.4 189.2L248.0 189.2Z" fill="#838daa" stroke="#fff" stroke-width="0.9" stroke-linejoin="round"/>
<path d="M316.1 170.1L317.5 169.5L314.5 177.0L312.5 178.5Z" fill="#838daa" stroke="#fff" stroke-width="0.9" stroke-linejoin="round"/>
<path d="M248.0 189.2L312.4 189.2L313.2 193.2L309.2 195.8L313.9 198.5L311.8 203.2L306.8 204.5L305.8 209.5L301.8 213.9L295.5 218.2L290.5 222.0L286.8 225.5L281.8 225.0L276.1 217.2L272.4 214.8L264.2 214.2L260.5 211.8L253.0 209.2L248.0 208.5L243.0 208.6L236.1 209.8L232.4 211.6L229.5 214.1L219.0 210.0L222.4 206.0L226.1 204.1L231.1 201.6L236.1 197.9L241.1 196.0L246.8 192.2Z" fill="#838daa" stroke="#fff" stroke-width="0.9" stroke-linejoin="round"/>
<path d="M229.5 214.1L232.4 211.6L236.1 209.8L243.0 208.6L248.0 208.5L253.0 209.2L260.5 211.8L264.2 214.2L272.4 214.8L276.1 217.2L281.8 225.0L278.6 229.5L274.2 234.5L269.2 239.5L264.2 243.2L259.9 254.5L251.8 254.5L248.0 242.2L246.1 229.2L240.5 223.0L235.5 218.0L231.8 214.1Z" fill="#9a84a8" stroke="#fff" stroke-width="0.9" stroke-linejoin="round"/>
<path d="M204.9 210.8L219.0 210.0L229.5 214.1L231.8 214.1L235.5 218.0L240.5 223.0L246.1 229.2L248.0 242.2L251.8 254.5L211.1 254.5L209.2 234.5L206.8 222.0Z" fill="#838daa" stroke="#fff" stroke-width="0.9" stroke-linejoin="round"/>
<path d="M176.0 210.8L204.9 210.8L206.8 222.0L209.2 234.5L211.1 254.5L172.4 254.5L174.0 234.5L175.2 222.0Z" fill="#639ab9" stroke="#fff" stroke-width="0.9" stroke-linejoin="round"/>
<path d="M153.6 210.5L176.0 210.8L175.2 222.0L174.0 234.5L172.4 254.5L143.6 254.5L142.8 237.6L143.0 228.2L146.1 220.8L149.2 214.5Z" fill="#30a8d0" stroke="#fff" stroke-width="0.9" stroke-linejoin="round"/>
<path d="M259.9 112.0L261.8 110.5L268.6 107.6L269.9 109.9L319.2 110.8L323.0 117.0L326.8 122.0L323.2 122.0L322.0 127.0L324.5 133.2L326.5 137.2L321.8 141.1L318.0 143.8L273.4 144.0L260.5 143.8L259.9 137.6L259.2 137.0L259.9 129.5Z" fill="#d3d3d3" stroke="#fff" stroke-width="0.9" stroke-linejoin="round"/>
<path d="M269.9 109.9L270.5 107.0L275.5 102.6L279.2 97.0L278.0 92.0L283.0 90.1L290.5 90.1L298.0 91.4L304.2 90.1L309.2 86.4L310.5 82.0L309.2 78.2L314.2 73.2L320.5 67.0L324.2 65.1L341.1 65.1L341.4 72.0L340.8 79.5L341.4 87.0L342.0 97.0L341.8 100.8L341.4 109.5L340.8 117.0L340.1 122.0L335.5 122.0L334.2 125.8L330.5 124.5L328.0 122.0L326.8 122.0L323.0 117.0L319.2 110.8Z" fill="#7393b3" stroke="#fff" stroke-width="0.9" stroke-linejoin="round"/>
<path d="M334.2 129.2L338.5 126.5L344.8 125.0L354.5 123.6L355.2 125.0L347.5 127.9L339.1 130.6L335.0 131.4Z" fill="#7393b3" stroke="#fff" stroke-width="0.9" stroke-linejoin="round"/>
<path d="M323.2 122.0L328.0 122.0L330.5 124.5L334.2 125.8L334.9 128.2L333.0 130.8L334.2 135.8L331.8 144.5L326.8 150.8L324.5 153.5L320.8 149.8L318.0 145.8L321.8 141.1L326.5 137.2L324.5 133.2L322.0 127.0Z" fill="#d3d3d3" stroke="#fff" stroke-width="0.9" stroke-linejoin="round"/>
<path d="M273.4 144.0L316.5 143.8L317.0 162.0L322.0 162.2L319.5 168.2L315.8 169.5L313.9 163.2L311.8 154.5L309.9 159.5L306.8 163.2L304.9 166.4L302.0 163.9L299.2 159.2L296.1 155.5L292.0 149.2L288.2 144.8L284.2 146.0L279.2 147.9L273.8 150.5Z" fill="#d3d3d3" stroke="#fff" stroke-width="0.9" stroke-linejoin="round"/>
<path d="M316.5 143.8L318.0 143.8L320.2 148.9L323.2 154.5L322.6 162.0L317.0 162.0Z" fill="#d3d3d3" stroke="#fff" stroke-width="0.9" stroke-linejoin="round"/>
<path d="M341.1 65.1L361.5 64.5L358.0 74.0L354.0 83.2L352.0 93.2L351.1 99.2L342.0 99.5L342.0 97.0L341.4 87.0L340.8 79.5L341.4 72.0Z" fill="#d3d3d3" stroke="#fff" stroke-width="0.9" stroke-linejoin="round"/>
<path d="M361.5 64.5L365.0 60.0L367.0 59.5L367.8 68.2L368.6 78.2L369.5 91.0L369.9 93.9L368.0 97.2L365.8 99.1L351.1 99.2L352.0 93.2L354.0 83.2L358.0 74.0Z" fill="#639ab9" stroke="#fff" stroke-width="0.9" stroke-linejoin="round"/>
<path d="M367.0 59.5L376.8 50.1L376.8 84.0L373.0 89.5L369.9 93.9L369.5 91.0L368.6 78.2L367.8 68.2Z" fill="#4f9ec1" stroke="#fff" stroke-width="0.9" stroke-linejoin="round"/>
<path d="M342.0 99.8L365.8 99.1L368.0 97.2L369.9 95.8L371.4 101.2L370.0 104.8L374.1 107.6L376.8 109.0L376.8 116.0L372.8 116.0L370.0 113.9L365.8 116.0L363.0 112.6L358.8 112.0L340.8 112.2L341.4 109.5L341.8 100.8Z" fill="#29a9df" stroke="#fff" stroke-width="0.9" stroke-linejoin="round"/>
<path d="M340.5 112.2L358.2 112.0L358.0 118.0L349.2 121.0L340.2 124.2L340.2 120.8Z" fill="#8890b0" stroke="#fff" stroke-width="0.9" stroke-linejoin="round"/>
<path d="M359.0 112.0L363.6 112.2L362.4 117.2L359.2 118.5Z" fill="#7393b3" stroke="#fff" stroke-width="0.9" stroke-linejoin="round"/>
<path d="M303.0 193.7L311.2 194.8L309.5 198.2L312.8 200.4L308.4 201.5L303.9 197.9Z" fill="#ffffff" stroke="#fff" stroke-width="0.9" stroke-linejoin="round"/>
<path d="M300.0 206.6L306.3 207.7L307.0 212.2L301.6 210.5Z" fill="#ffffff" stroke="#fff" stroke-width="0.9" stroke-linejoin="round"/>
<path d="M306.3 153.4L309.8 147.1L311.9 148.5L309.5 159.0L308.1 164.6L310.5 173.0L308.6 173.7L305.6 164.6Z" fill="#ffffff" stroke="#fff" stroke-width="0.9" stroke-linejoin="round"/>
<text x="107" y="49.5" text-anchor="middle" class="ml">$4.26M</text>
<text x="41" y="79.5" text-anchor="middle" class="ml">$4.31M</text>
<text x="155" y="76.5" text-anchor="middle" class="ml">$3.98M</text>
<text x="216" y="94.5" text-anchor="middle" class="ml">$4.69M</text>
<text x="316.5" y="101.5" text-anchor="middle" class="ml">$4.1M</text>
<text x="236" y="142.5" text-anchor="middle" class="ml">$4.22M</text>
<text x="128" y="170.5" text-anchor="middle" class="ml">$3.83M</text>
<text x="208" y="182.5" text-anchor="middle" class="ml">$3.92M</text>
<text x="279.5" y="182.5" text-anchor="middle" class="ml">$4.26M</text>
<text x="195.5" y="205.0" text-anchor="middle" class="ml">$4.21M</text>
<text x="274" y="209.5" text-anchor="middle" class="ml">$4.35M</text>
<text x="257" y="231.0" text-anchor="middle" class="ml">$4.51M</text>
<text x="228.5" y="248.0" text-anchor="middle" class="ml">$4.28M</text>
<text x="342" y="112.5" text-anchor="start" class="ml">$3.7M</text>
<text x="1.5" y="161.5" text-anchor="end" class="ml">$4.11M</text>
</svg>
</body>
</html>
